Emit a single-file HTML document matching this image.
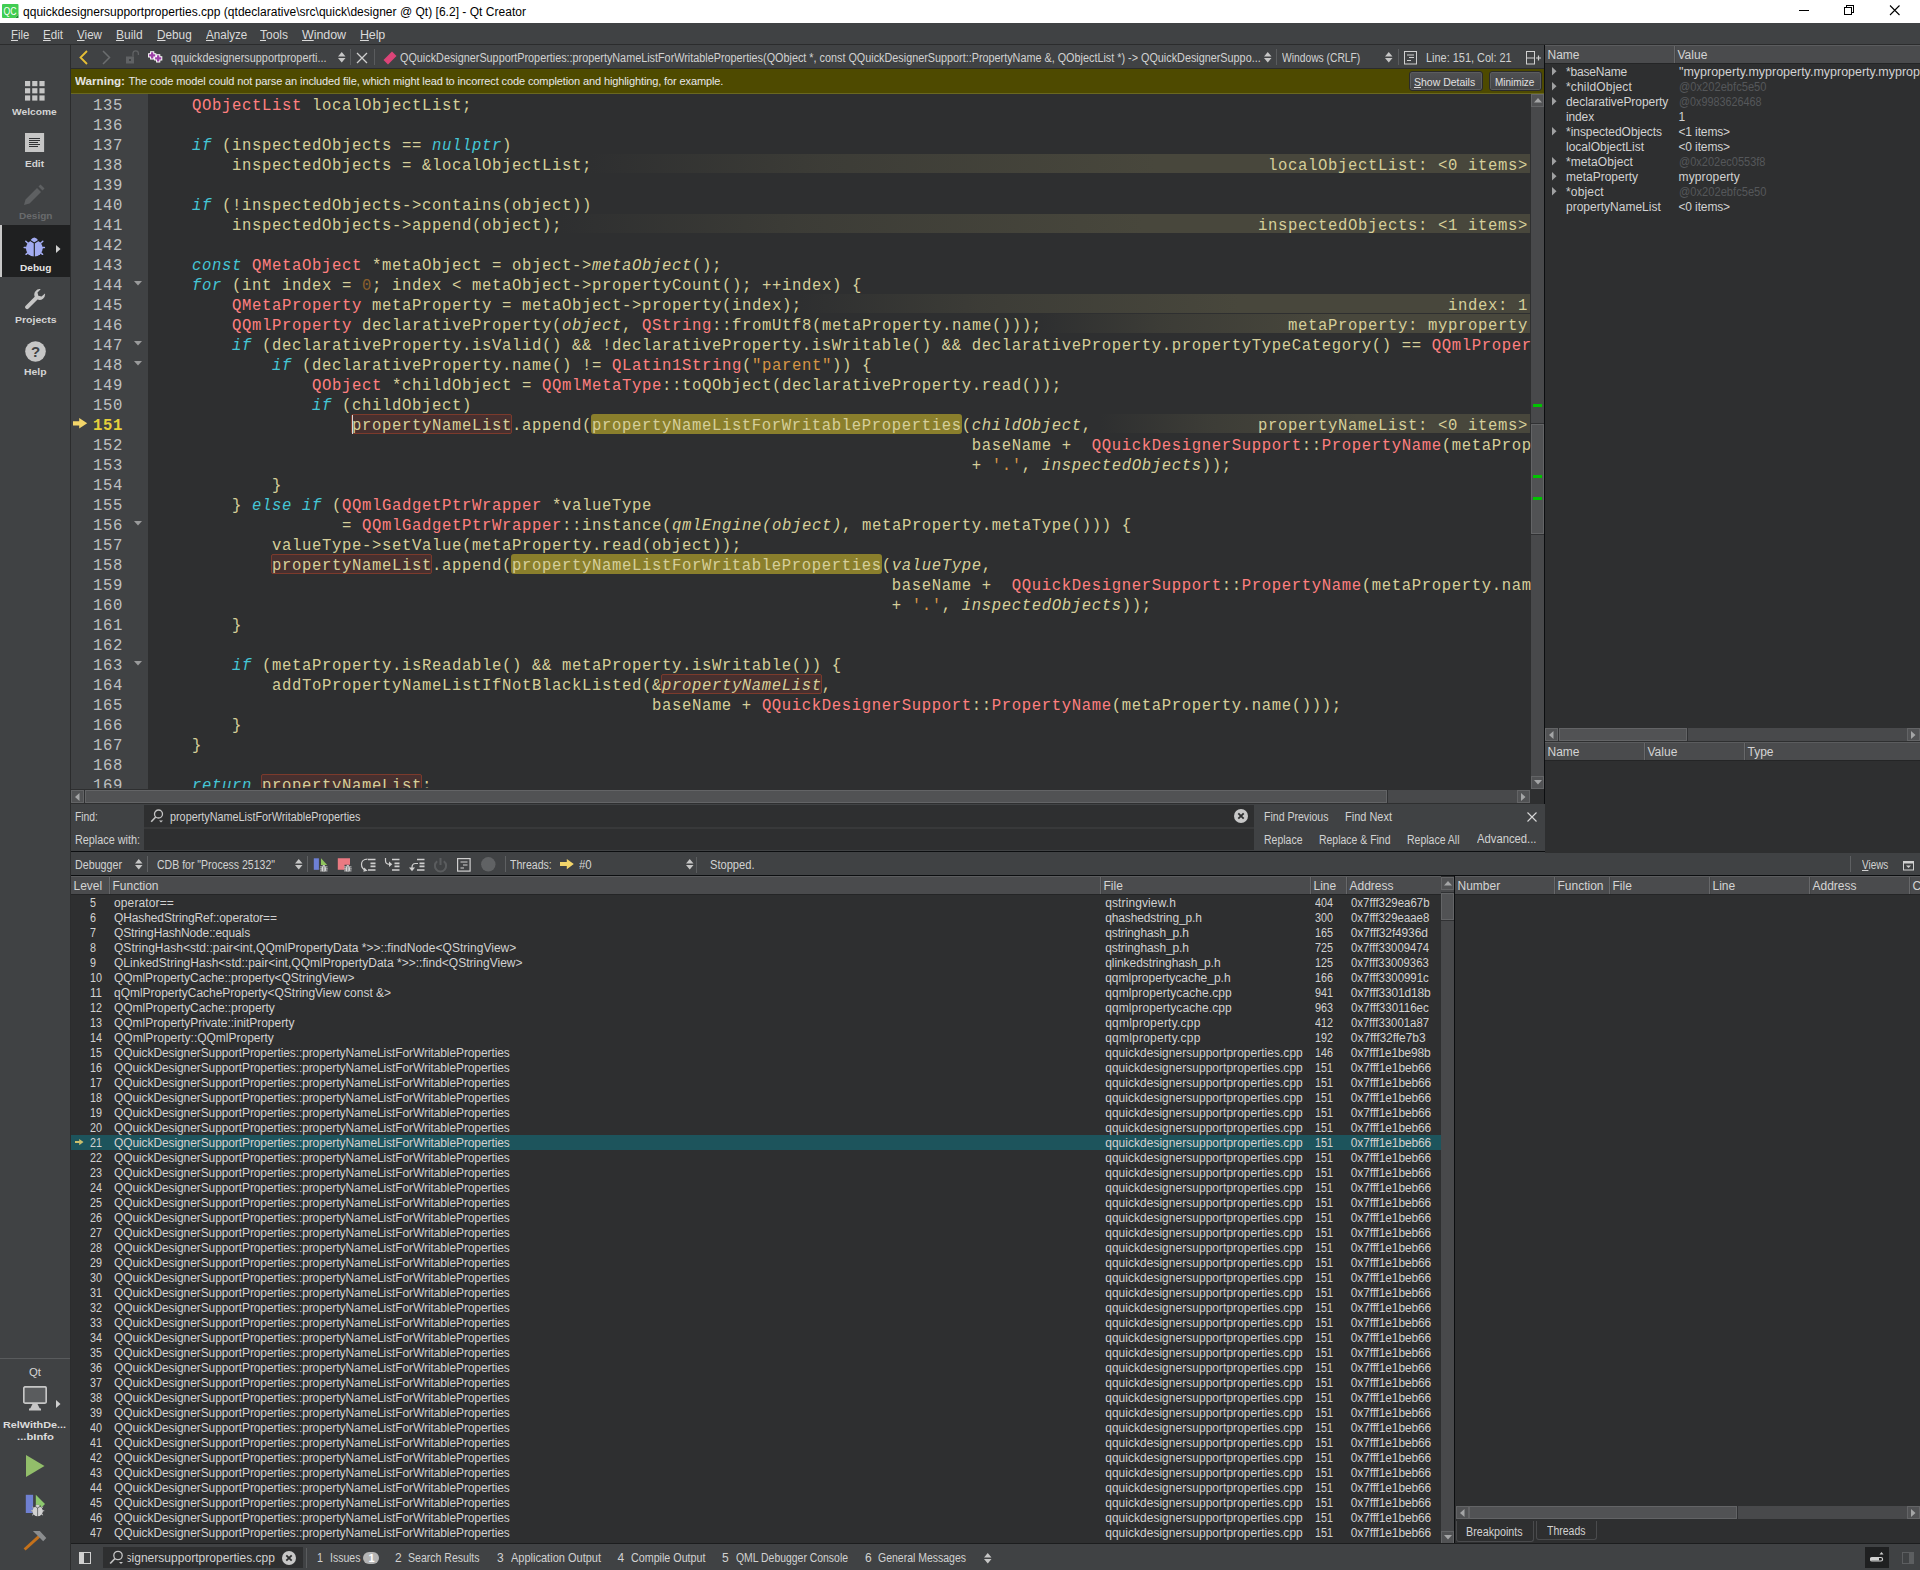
<!DOCTYPE html><html><head><meta charset="utf-8"><title>Qt Creator</title><style>
*{box-sizing:border-box;margin:0;padding:0}
html,body{width:1920px;height:1570px;overflow:hidden;background:#2e2f30}
body{font-family:"Liberation Sans",sans-serif;font-size:12px;color:#d2d2d2;position:relative}
.a{position:absolute;white-space:pre}
.t{position:absolute;white-space:pre;line-height:16px;height:16px}
.b{font-weight:bold}
.hd{position:absolute;background:#4a4b4d;border-top:1px solid #5b5c5e;border-bottom:1px solid #242526;height:19px;overflow:hidden}
.hs{position:absolute;top:0;width:2px;height:17px;background:#67686a;border-right:1px solid #444547}
.mono{font-family:"Liberation Mono",monospace;font-size:15.600px;letter-spacing:0.640px}
.cl{position:absolute;left:152px;height:20px;line-height:20px;white-space:pre;color:#d6cf9a}
.ln{position:absolute;left:72px;width:51px;text-align:right;height:20px;line-height:20px;color:#bec0c2;letter-spacing:0.640px}
.k{color:#45c6d6;font-style:italic}
.ty{color:#ff8080}
.n{color:#8a602c}
.s{color:#d69545}
.i{font-style:italic}
.ann{position:absolute;height:20px}
.sbh{position:absolute;background:#515254;border:1px solid #636466}
.side{position:absolute;left:0;width:70px;text-align:center;font-weight:bold;font-size:11px;color:#d0d0d0;white-space:pre}
u{text-decoration:underline;text-underline-offset:1px}
</style></head><body>
<div class="a" style="left:0px;top:0px;width:1920px;height:23px;background:#ffffff;"></div>
<svg class="a" style="left:2px;top:4px;" width="17" height="14" viewBox="0 0 17 14"><path d="M1 0h14.500a1 1 0 0 1 1 1v9.500l-3.500 3.500h-12a1 1 0 0 1-1-1v-12a1 1 0 0 1 1-1z" fill="#41cd52"/><path d="M13 14l3.500-3.500v3.500z" fill="#1f8f34"/><text x="1.500" y="11" font-family="Liberation Sans" font-size="10.500" fill="#fff" textLength="13" lengthAdjust="spacingAndGlyphs">QC</text></svg>
<div class="t" style="left:23px;top:3.5px;font-family:'Liberation Sans';font-size:12px;letter-spacing:0.020px;color:#000;">qquickdesignersupportproperties.cpp (qtdeclarative\src\quick\designer @ Qt) [6.2] - Qt Creator</div>
<svg class="a" style="left:1780px;top:0px;" width="140" height="23" viewBox="0 0 140 23"><g stroke="#000" stroke-width="1" fill="none" shape-rendering="crispEdges"><path d="M19 10.500h10"/><path d="M64.500 7.500h7v7h-7z"/><path d="M66.500 7.500v-2h7v7h-2"/></g><path d="M110 5.500l9.500 9.500M119.500 5.500l-9.500 9.500" stroke="#000" stroke-width="1.100" fill="none"/></svg>
<div class="a" style="left:0px;top:23px;width:1920px;height:22px;background:#404244;"></div>
<div class="a" style="left:0px;top:44px;width:1920px;height:1px;background:#2b2c2d;"></div>
<div class="t" style="left:11px;top:26.5px;font-family:'Liberation Sans';font-size:12.5px;transform:scaleX(0.9079);transform-origin:0 0;color:#dadada;"><u>F</u>ile</div>
<div class="t" style="left:42.7px;top:26.5px;font-family:'Liberation Sans';font-size:12.5px;transform:scaleX(0.9282);transform-origin:0 0;color:#dadada;"><u>E</u>dit</div>
<div class="t" style="left:77px;top:26.5px;font-family:'Liberation Sans';font-size:12.5px;transform:scaleX(0.9297);transform-origin:0 0;color:#dadada;"><u>V</u>iew</div>
<div class="t" style="left:116px;top:26.5px;font-family:'Liberation Sans';font-size:12.5px;transform:scaleX(0.9600);transform-origin:0 0;color:#dadada;"><u>B</u>uild</div>
<div class="t" style="left:157px;top:26.5px;font-family:'Liberation Sans';font-size:12.5px;transform:scaleX(0.9418);transform-origin:0 0;color:#dadada;"><u>D</u>ebug</div>
<div class="t" style="left:206px;top:26.5px;font-family:'Liberation Sans';font-size:12.5px;transform:scaleX(0.9284);transform-origin:0 0;color:#dadada;"><u>A</u>nalyze</div>
<div class="t" style="left:260px;top:26.5px;font-family:'Liberation Sans';font-size:12.5px;transform:scaleX(0.9593);transform-origin:0 0;color:#dadada;"><u>T</u>ools</div>
<div class="t" style="left:302px;top:26.5px;font-family:'Liberation Sans';font-size:12.5px;letter-spacing:-0.081px;color:#dadada;"><u>W</u>indow</div>
<div class="t" style="left:360px;top:26.5px;font-family:'Liberation Sans';font-size:12.5px;letter-spacing:-0.180px;color:#dadada;"><u>H</u>elp</div>
<div class="a" style="left:0px;top:45px;width:70px;height:1525px;background:#404244;"></div>
<div class="a" style="left:70px;top:45px;width:1px;height:1525px;background:#2b2c2d;"></div>
<div class="a" style="left:71px;top:45px;width:1474px;height:24px;background:#404244;"></div>
<div class="a" style="left:71px;top:68px;width:1474px;height:1px;background:#2b2c2d;"></div>
<svg class="a" style="left:79px;top:50px;" width="9" height="15" viewBox="0 0 9 15"><path d="M8 1l-6.500 6.500 6.500 6.500" stroke="#e6bf36" stroke-width="1.800" fill="none"/></svg>
<svg class="a" style="left:102px;top:50px;" width="9" height="15" viewBox="0 0 9 15"><path d="M1 1l6.500 6.500-6.500 6.500" stroke="#6b6d6f" stroke-width="1.500" fill="none"/></svg>
<svg class="a" style="left:125px;top:49px;" width="15" height="16" viewBox="0 0 15 16"><rect x="1" y="7.500" width="8" height="7" fill="#606264"/><rect x="4" y="10" width="2" height="2" fill="#404244"/><path d="M8 7.500v-3a2.700 2.700 0 0 1 5.400 0v1.500" stroke="#606264" stroke-width="1.300" fill="none"/></svg>
<svg class="a" style="left:147px;top:50px;" width="16" height="14" viewBox="0 0 16 14"><path d="M1.1000000000000005 5.3h8.2M5.2 1.2000000000000002v8.2" stroke="#ffffff" stroke-width="4.2" fill="none"/><path d="M7.1 8.4h8.2M11.2 4.300000000000001v8.2" stroke="#ffffff" stroke-width="4.2" fill="none"/><path d="M2.1 5.3h6.2M5.2 2.1999999999999997v6.2" stroke="#9c3fa6" stroke-width="2.3" fill="none"/><path d="M8.1 8.4h6.2M11.2 5.300000000000001v6.2" stroke="#9c3fa6" stroke-width="2.3" fill="none"/></svg>
<div class="t" style="left:171.4px;top:50px;font-family:'Liberation Sans';font-size:12px;transform:scaleX(0.9076);transform-origin:0 0;">qquickdesignersupportproperti...</div>
<svg class="a" style="left:337.8px;top:52.2px;" width="8" height="11" viewBox="0 0 8 11"><path d="M0 4.500l3.750-4.500 3.750 4.500zM0 5.900l3.750 4.500 3.750-4.500z" fill="#c6c6c6"/></svg>
<div class="a" style="left:350px;top:49px;width:1px;height:16px;background:#5a5c5e;"></div>
<svg class="a" style="left:356px;top:51.5px;" width="12" height="12" viewBox="0 0 12 12"><path d="M1 1l10 10M11 1l-10 10" stroke="#d0d0d0" stroke-width="1.300"/></svg>
<div class="a" style="left:374px;top:49px;width:1px;height:16px;background:#5a5c5e;"></div>
<svg class="a" style="left:383px;top:50.5px;" width="14" height="14" viewBox="0 0 14 14"><path d="M9 .500l4.500 4.500-8.500 8.500-4.500-4.500z" fill="#dc4478"/></svg>
<div class="t" style="left:400px;top:50px;font-family:'Liberation Sans';font-size:12px;transform:scaleX(0.9017);transform-origin:0 0;">QQuickDesignerSupportProperties::propertyNameListForWritableProperties(QObject *, const QQuickDesignerSupport::PropertyName &amp;, QObjectList *) -&gt; QQuickDesignerSuppo...</div>
<svg class="a" style="left:1263.6px;top:52.2px;" width="8" height="11" viewBox="0 0 8 11"><path d="M0 4.500l3.750-4.500 3.750 4.500zM0 5.900l3.750 4.500 3.750-4.500z" fill="#c6c6c6"/></svg>
<div class="a" style="left:1276px;top:49px;width:1px;height:16px;background:#5a5c5e;"></div>
<div class="t" style="left:1281.7px;top:50px;font-family:'Liberation Sans';font-size:12px;transform:scaleX(0.8572);transform-origin:0 0;">Windows (CRLF)</div>
<svg class="a" style="left:1385.2px;top:52.2px;" width="8" height="11" viewBox="0 0 8 11"><path d="M0 4.500l3.750-4.500 3.750 4.500zM0 5.900l3.750 4.500 3.750-4.500z" fill="#c6c6c6"/></svg>
<div class="a" style="left:1398px;top:49px;width:1px;height:16px;background:#5a5c5e;"></div>
<svg class="a" style="left:1404px;top:51px;" width="13" height="14" viewBox="0 0 13 14"><rect x=".5" y=".5" width="12" height="12.500" fill="none" stroke="#d0d0d0"/><path d="M3 4h7M5 6.500h5M3 9.500h4" stroke="#d0d0d0" stroke-width="1"/></svg>
<div class="t" style="left:1426px;top:50px;font-family:'Liberation Sans';font-size:12px;transform:scaleX(0.9109);transform-origin:0 0;">Line: 151, Col: 21</div>
<svg class="a" style="left:1526px;top:51px;" width="15" height="14" viewBox="0 0 15 14"><rect x=".5" y=".5" width="8" height="12.500" fill="none" stroke="#d0d0d0"/><path d="M.500 7h8" stroke="#d0d0d0"/><path d="M10 7h5M12.500 4.500v5" stroke="#d0d0d0" stroke-width="1.200"/></svg>
<div class="a" style="left:71px;top:69px;width:1474px;height:25px;background:#4e4a00;"></div>
<div class="a" style="left:71px;top:93px;width:1474px;height:1px;background:#6a6820;"></div>
<div class="t" style="left:75px;top:73px;font-family:'Liberation Sans';font-size:11px;font-weight:bold;transform:scaleX(1.0582);transform-origin:0 0;color:#e4e4e0;">Warning:</div>
<div class="t" style="left:128.4px;top:73px;font-family:'Liberation Sans';font-size:11px;letter-spacing:-0.113px;color:#e8e8e8;">The code model could not parse an included file, which might lead to incorrect code completion and highlighting, for example.</div>
<div class="a" style="left:1408.5px;top:71px;width:74.0px;height:20px;background:linear-gradient(#4f5052,#434446);border:1px solid #2a2a2a;border-radius:3px;box-shadow:inset 0 0 0 1px #5c5d5f"></div>
<div class="t" style="left:1414.4px;top:73.5px;font-family:'Liberation Sans';font-size:11.5px;transform:scaleX(0.9117);transform-origin:0 0;color:#e0e0e0;"><u>S</u>how Details</div>
<div class="a" style="left:1489px;top:71px;width:52.5px;height:20px;background:linear-gradient(#4f5052,#434446);border:1px solid #2a2a2a;border-radius:3px;box-shadow:inset 0 0 0 1px #5c5d5f"></div>
<div class="t" style="left:1495px;top:73.5px;font-family:'Liberation Sans';font-size:11.5px;transform:scaleX(0.8683);transform-origin:0 0;color:#e0e0e0;">Minimize</div>
<div class="a" style="left:71px;top:94px;width:77px;height:695px;background:#404244;"></div>
<div class="a" style="left:148px;top:94px;width:1383px;height:695px;background:#2e2f30;"></div>
<div class="a mono" style="left:0;top:94px;width:1531px;height:694px;overflow:hidden">
<div class="ln" style="top:2.0px">135</div>
<div class="cl" style="top:2.0px">    <span class="ty">QObjectList</span> localObjectList;</div>
<div class="ln" style="top:22.0px">136</div>
<div class="ln" style="top:42.0px">137</div>
<div class="cl" style="top:42.0px">    <span class="k">if</span> (inspectedObjects == <span class="k">nullptr</span>)</div>
<div class="ann" style="left:590px;top:60px;width:940px;height:19px;background:linear-gradient(90deg,rgba(72,71,60,0) 0,rgba(72,71,60,.55) 25%,rgba(72,71,60,1) 60%)"></div>
<div class="cl" style="left:auto;right:3px;top:62.0px">localObjectList: &lt;0 items&gt;</div>
<div class="ln" style="top:62.0px">138</div>
<div class="cl" style="top:62.0px">        inspectedObjects = &amp;localObjectList;</div>
<div class="ln" style="top:82.0px">139</div>
<div class="ln" style="top:102.0px">140</div>
<div class="cl" style="top:102.0px">    <span class="k">if</span> (!inspectedObjects-&gt;contains(object))</div>
<div class="ann" style="left:560px;top:120px;width:970px;height:19px;background:linear-gradient(90deg,rgba(72,71,60,0) 0,rgba(72,71,60,.55) 25%,rgba(72,71,60,1) 60%)"></div>
<div class="cl" style="left:auto;right:3px;top:122.0px">inspectedObjects: &lt;1 items&gt;</div>
<div class="ln" style="top:122.0px">141</div>
<div class="cl" style="top:122.0px">        inspectedObjects-&gt;append(object);</div>
<div class="ln" style="top:142.0px">142</div>
<div class="ln" style="top:162.0px">143</div>
<div class="cl" style="top:162.0px">    <span class="k">const</span> <span class="ty">QMetaObject</span> *metaObject = object-&gt;<span class="i">metaObject</span>();</div>
<div class="ln" style="top:182.0px">144</div>
<div class="cl" style="top:182.0px">    <span class="k">for</span> (int index = <span class="n">0</span>; index &lt; metaObject-&gt;propertyCount(); ++index) {</div>
<div class="ann" style="left:800px;top:200px;width:730px;height:19px;background:linear-gradient(90deg,rgba(72,71,60,0) 0,rgba(72,71,60,.55) 25%,rgba(72,71,60,1) 60%)"></div>
<div class="cl" style="left:auto;right:3px;top:202.0px">index: 1</div>
<div class="ln" style="top:202.0px">145</div>
<div class="cl" style="top:202.0px">        <span class="ty">QMetaProperty</span> metaProperty = metaObject-&gt;property(index);</div>
<div class="ann" style="left:1040px;top:220px;width:490px;height:19px;background:linear-gradient(90deg,rgba(72,71,60,0) 0,rgba(72,71,60,.55) 25%,rgba(72,71,60,1) 60%)"></div>
<div class="cl" style="left:auto;right:3px;top:222.0px">metaProperty: myproperty</div>
<div class="ln" style="top:222.0px">146</div>
<div class="cl" style="top:222.0px">        <span class="ty">QQmlProperty</span> declarativeProperty(<span class="i">object</span>, <span class="ty">QString</span>::fromUtf8(metaProperty.name()));</div>
<div class="ln" style="top:242.0px">147</div>
<div class="cl" style="top:242.0px">        <span class="k">if</span> (declarativeProperty.isValid() &amp;&amp; !declarativeProperty.isWritable() &amp;&amp; declarativeProperty.propertyTypeCategory() == <span class="ty">QQmlProperty::Object) {</span></div>
<div class="ln" style="top:262.0px">148</div>
<div class="cl" style="top:262.0px">            <span class="k">if</span> (declarativeProperty.name() != <span class="ty">QLatin1String</span>(<span class="s">&quot;parent&quot;</span>)) {</div>
<div class="ln" style="top:282.0px">149</div>
<div class="cl" style="top:282.0px">                <span class="ty">QObject</span> *childObject = <span class="ty">QQmlMetaType</span>::toQObject(declarativeProperty.read());</div>
<div class="ln" style="top:302.0px">150</div>
<div class="cl" style="top:302.0px">                <span class="k">if</span> (childObject)</div>
<div class="ann" style="left:1100px;top:320px;width:430px;height:19px;background:linear-gradient(90deg,rgba(72,71,60,0) 0,rgba(72,71,60,.55) 25%,rgba(72,71,60,1) 60%)"></div>
<div class="cl" style="left:auto;right:3px;top:322.0px">propertyNameList: &lt;0 items&gt;</div>
<div class="a" style="left:351px;top:320px;width:161px;height:20px;background:#47302f;border:1px solid #7c3a2c;border-radius:2px"></div>
<div class="a" style="left:591px;top:320px;width:371px;height:20px;background:#8a7f2c;border-radius:3px"></div>
<div class="ln" style="top:322.0px;color:#e6d03c;font-weight:bold">151</div>
<div class="cl" style="top:322.0px">                    propertyNameList.append(<span style="color:#d6cf9a">propertyNameListForWritableProperties</span>(<span class="i">childObject</span>,</div>
<div class="ln" style="top:342.0px">152</div>
<div class="cl" style="top:342.0px">                                                                                  baseName +  <span class="ty">QQuickDesignerSupport</span>::<span class="ty">PropertyName</span>(metaProperty.name())</div>
<div class="ln" style="top:362.0px">153</div>
<div class="cl" style="top:362.0px">                                                                                  + <span class="s">&#x27;.&#x27;</span>, <span class="i">inspectedObjects</span>));</div>
<div class="ln" style="top:382.0px">154</div>
<div class="cl" style="top:382.0px">            }</div>
<div class="ln" style="top:402.0px">155</div>
<div class="cl" style="top:402.0px">        } <span class="k">else</span> <span class="k">if</span> (<span class="ty">QQmlGadgetPtrWrapper</span> *valueType</div>
<div class="ln" style="top:422.0px">156</div>
<div class="cl" style="top:422.0px">                   = <span class="ty">QQmlGadgetPtrWrapper</span>::instance(<span class="i">qmlEngine(object)</span>, metaProperty.metaType())) {</div>
<div class="ln" style="top:442.0px">157</div>
<div class="cl" style="top:442.0px">            valueType-&gt;setValue(metaProperty.read(object));</div>
<div class="a" style="left:271px;top:460px;width:161px;height:20px;background:#47302f;border:1px solid #7c3a2c;border-radius:2px"></div>
<div class="a" style="left:511px;top:460px;width:371px;height:20px;background:#8a7f2c;border-radius:3px"></div>
<div class="ln" style="top:462.0px">158</div>
<div class="cl" style="top:462.0px">            propertyNameList.append(<span style="color:#d6cf9a">propertyNameListForWritableProperties</span>(<span class="i">valueType</span>,</div>
<div class="ln" style="top:482.0px">159</div>
<div class="cl" style="top:482.0px">                                                                          baseName +  <span class="ty">QQuickDesignerSupport</span>::<span class="ty">PropertyName</span>(metaProperty.name())</div>
<div class="ln" style="top:502.0px">160</div>
<div class="cl" style="top:502.0px">                                                                          + <span class="s">&#x27;.&#x27;</span>, <span class="i">inspectedObjects</span>));</div>
<div class="ln" style="top:522.0px">161</div>
<div class="cl" style="top:522.0px">        }</div>
<div class="ln" style="top:542.0px">162</div>
<div class="ln" style="top:562.0px">163</div>
<div class="cl" style="top:562.0px">        <span class="k">if</span> (metaProperty.isReadable() &amp;&amp; metaProperty.isWritable()) {</div>
<div class="a" style="left:661px;top:580px;width:161px;height:20px;background:#47302f;border:1px solid #7c3a2c;border-radius:2px"></div>
<div class="ln" style="top:582.0px">164</div>
<div class="cl" style="top:582.0px">            addToPropertyNameListIfNotBlackListed(&amp;<span class="i">propertyNameList</span>,</div>
<div class="ln" style="top:602.0px">165</div>
<div class="cl" style="top:602.0px">                                                  baseName + <span class="ty">QQuickDesignerSupport</span>::<span class="ty">PropertyName</span>(metaProperty.name()));</div>
<div class="ln" style="top:622.0px">166</div>
<div class="cl" style="top:622.0px">        }</div>
<div class="ln" style="top:642.0px">167</div>
<div class="cl" style="top:642.0px">    }</div>
<div class="ln" style="top:662.0px">168</div>
<div class="a" style="left:261px;top:680px;width:161px;height:20px;background:#47302f;border:1px solid #7c3a2c;border-radius:2px"></div>
<div class="ln" style="top:682.0px">169</div>
<div class="cl" style="top:682.0px">    <span class="k">return</span> propertyNameList;</div>
</div>
<svg class="a" style="left:134px;top:281px;" width="8" height="5" viewBox="0 0 8 5"><path d="M0 0h8l-4 4.500z" fill="#9a9b9c"/></svg>
<svg class="a" style="left:134px;top:341px;" width="8" height="5" viewBox="0 0 8 5"><path d="M0 0h8l-4 4.500z" fill="#9a9b9c"/></svg>
<svg class="a" style="left:134px;top:361px;" width="8" height="5" viewBox="0 0 8 5"><path d="M0 0h8l-4 4.500z" fill="#9a9b9c"/></svg>
<svg class="a" style="left:134px;top:521px;" width="8" height="5" viewBox="0 0 8 5"><path d="M0 0h8l-4 4.500z" fill="#9a9b9c"/></svg>
<svg class="a" style="left:134px;top:661px;" width="8" height="5" viewBox="0 0 8 5"><path d="M0 0h8l-4 4.500z" fill="#9a9b9c"/></svg>
<svg class="a" style="left:72.9px;top:417.7px;" width="15" height="11" viewBox="0 0 15 11"><path d="M0 3.200h6.200v-3.200l8 5.300-8 5.300v-3.200h-6.200z" fill="#f3d56a"/></svg>
<div class="a" style="left:352px;top:415px;width:1px;height:19px;background:#d8d8d8;"></div>
<div class="a" style="left:1531px;top:94px;width:13px;height:695px;background:#48494b;"></div>
<div class="a" style="left:1531px;top:423px;width:13px;height:112px;background:#303133;"></div>
<div class="sbh" style="left:1531px;top:94px;width:13px;height:13px"></div>
<svg class="a" style="left:1533.5px;top:98px;" width="8" height="5" viewBox="0 0 8 5"><path d="M0 4.500h8l-4-4.500z" fill="#a4a5a6"/></svg>
<div class="sbh" style="left:1531px;top:776px;width:13px;height:13px"></div>
<svg class="a" style="left:1533.5px;top:780px;" width="8" height="5" viewBox="0 0 8 5"><path d="M0 0h8l-4 4.500z" fill="#a4a5a6"/></svg>
<div class="sbh" style="left:1531px;top:424px;width:13px;height:110px"></div>
<div class="a" style="left:1533px;top:404px;width:9px;height:3px;background:#00c400;"></div>
<div class="a" style="left:1533px;top:475px;width:9px;height:3px;background:#00c400;"></div>
<div class="a" style="left:1533px;top:497px;width:9px;height:3px;background:#00c400;"></div>
<div class="a" style="left:71px;top:789px;width:1474px;height:15px;background:#2e2f30;"></div>
<div class="a" style="left:71px;top:790px;width:1459px;height:13px;background:#48494b;"></div>
<div class="a" style="left:84px;top:790px;width:1304px;height:13px;background:#303133;"></div>
<div class="sbh" style="left:71px;top:790px;width:13px;height:13px"></div>
<svg class="a" style="left:75px;top:792.5px;" width="5" height="8" viewBox="0 0 5 8"><path d="M4.500 0v8l-4.500-4z" fill="#a4a5a6"/></svg>
<div class="sbh" style="left:1517px;top:790px;width:13px;height:13px"></div>
<svg class="a" style="left:1521px;top:792.5px;" width="5" height="8" viewBox="0 0 5 8"><path d="M0 0v8l4.500-4z" fill="#a4a5a6"/></svg>
<div class="sbh" style="left:85px;top:790px;width:1302px;height:13px"></div>
<div class="a" style="left:1544px;top:45px;width:1px;height:808px;background:#0c0e10;"></div>
<div class="a" style="left:71px;top:804px;width:1474px;height:47px;background:#404244;"></div>
<div class="a" style="left:71px;top:851px;width:1849px;height:1px;background:#0c0e10;"></div>
<div class="t" style="left:75px;top:808.5px;font-family:'Liberation Sans';font-size:12px;transform:scaleX(0.8618);transform-origin:0 0;">Find:</div>
<div class="t" style="left:75px;top:832px;font-family:'Liberation Sans';font-size:12px;transform:scaleX(0.9022);transform-origin:0 0;">Replace with:</div>
<div class="a" style="left:144px;top:805px;width:1110px;height:22px;background:#2e2f30;"></div>
<div class="a" style="left:144px;top:827px;width:1110px;height:2px;background:#38393a;"></div>
<div class="a" style="left:144px;top:828.5px;width:1110px;height:21px;background:#2e2f30;"></div>
<div class="t" style="left:170px;top:808.5px;font-family:'Liberation Sans';font-size:12px;transform:scaleX(0.9020);transform-origin:0 0;">propertyNameListForWritableProperties</div>
<svg class="a" style="left:150px;top:809px;" width="16" height="14" viewBox="0 0 16 14"><circle cx="8.500" cy="5" r="4" fill="none" stroke="#c4c4c4" stroke-width="1.300"/><path d="M5.700 8l-4.500 4.800" stroke="#c4c4c4" stroke-width="1.600"/><path d="M9 11.500h4l-2 2z" fill="#c4c4c4"/></svg>
<svg class="a" style="left:1234px;top:809px;" width="14" height="14" viewBox="0 0 14 14"><circle cx="7" cy="7" r="7" fill="#c8c8c8"/><path d="M4.300 4.300l5.400 5.400M9.700 4.300l-5.400 5.400" stroke="#2e2f30" stroke-width="1.800"/></svg>
<div class="t" style="left:1264px;top:808.5px;font-family:'Liberation Sans';font-size:12px;transform:scaleX(0.8790);transform-origin:0 0;">Find Previous</div>
<div class="t" style="left:1345px;top:808.5px;font-family:'Liberation Sans';font-size:12px;transform:scaleX(0.9151);transform-origin:0 0;">Find Next</div>
<div class="t" style="left:1264px;top:832px;font-family:'Liberation Sans';font-size:12px;transform:scaleX(0.8744);transform-origin:0 0;">Replace</div>
<div class="t" style="left:1319px;top:832px;font-family:'Liberation Sans';font-size:12px;transform:scaleX(0.8715);transform-origin:0 0;">Replace &amp; Find</div>
<div class="t" style="left:1407px;top:832px;font-family:'Liberation Sans';font-size:12px;transform:scaleX(0.8743);transform-origin:0 0;">Replace All</div>
<div class="t" style="left:1476.5px;top:831px;font-family:'Liberation Sans';font-size:12px;transform:scaleX(0.9389);transform-origin:0 0;">Advanced...</div>
<svg class="a" style="left:1526.5px;top:811.5px;" width="10" height="10" viewBox="0 0 10 10"><path d="M.500 .500l9 9M9.500 .500l-9 9" stroke="#d8d8d8" stroke-width="1.100"/></svg>
<div class="a" style="left:71px;top:852px;width:1849px;height:23px;background:#404244;"></div>
<div class="a" style="left:71px;top:875px;width:1849px;height:1px;background:#0c0e10;"></div>
<div class="t" style="left:75px;top:857px;font-family:'Liberation Sans';font-size:12px;transform:scaleX(0.8915);transform-origin:0 0;">Debugger</div>
<svg class="a" style="left:134.8px;top:858.9px;" width="8" height="11" viewBox="0 0 8 11"><path d="M0 4.500l3.750-4.500 3.750 4.500zM0 5.900l3.750 4.500 3.750-4.500z" fill="#c6c6c6"/></svg>
<div class="a" style="left:147px;top:856px;width:1px;height:16px;background:#5e6062;"></div>
<div class="t" style="left:156.6px;top:857px;font-family:'Liberation Sans';font-size:12px;transform:scaleX(0.8768);transform-origin:0 0;">CDB for &quot;Process 25132&quot;</div>
<svg class="a" style="left:294.8px;top:858.9px;" width="8" height="11" viewBox="0 0 8 11"><path d="M0 4.500l3.750-4.500 3.750 4.500zM0 5.900l3.750 4.500 3.750-4.500z" fill="#c6c6c6"/></svg>
<div class="a" style="left:307px;top:856px;width:1px;height:16px;background:#5e6062;"></div>
<svg class="a" style="left:313px;top:858px;" width="16" height="16" viewBox="0 0 16 16"><rect x=".8" y=".3" width="5.100" height="11.500" fill="#6d80d6"/><path d="M8 .300l6.200 6.700h-6.200z" fill="#8fc35c"/><g transform="translate(6.800,6.600)"><g fill="#d4d4d4"><ellipse cx="4" cy="4.300" rx="2.300" ry="2.700"/><path d="M2.600 1.800a1.400 1.400 0 0 1 2.800 0z"/><path d="M.300 2.300h7.400M0 4.300h8M.300 6.300h7.400" stroke="#d4d4d4" stroke-width=".9"/></g><path d="M4 2v5" stroke="#404244" stroke-width=".6"/></g></svg>
<svg class="a" style="left:337px;top:858px;" width="16" height="16" viewBox="0 0 16 16"><path d="M.8 .3h12.200v6.500h-5.500v5h-6.700z" fill="#ea7a82"/><g transform="translate(6.800,6.600)"><g fill="#d4d4d4"><ellipse cx="4" cy="4.300" rx="2.300" ry="2.700"/><path d="M2.600 1.800a1.400 1.400 0 0 1 2.800 0z"/><path d="M.300 2.300h7.400M0 4.300h8M.300 6.300h7.400" stroke="#d4d4d4" stroke-width=".9"/></g><path d="M4 2v5" stroke="#404244" stroke-width=".6"/></g></svg>
<svg class="a" style="left:360px;top:858px;" width="16" height="16" viewBox="0 0 16 16"><path d="M7.500 1.200c-4 0-6 2.500-6 5s1.500 5 4 5.800" fill="none" stroke="#cfcfcf" stroke-width="1.200"/><path d="M4.300 9.500l3.200 3.200-4.200 1z" fill="#cfcfcf"/><path d="M8 1.500h7.500M10.5 5.300h5M10.5 8.300h5M8 12h7.500" stroke="#cfcfcf" stroke-width="1.700"/></svg>
<svg class="a" style="left:384px;top:858px;" width="16" height="16" viewBox="0 0 16 16"><path d="M1.500 0v2.500c0 2.500 1.500 3.800 4 3.800h1" fill="none" stroke="#cfcfcf" stroke-width="1.200"/><path d="M5 3.500l3.300 2.800-3.300 2.800z" fill="#cfcfcf"/><path d="M8 1.500h7.500M10.5 5.300h5M10.5 8.300h5M8 12h7.500" stroke="#cfcfcf" stroke-width="1.700"/></svg>
<svg class="a" style="left:408.5px;top:858px;" width="16" height="16" viewBox="0 0 16 16"><path d="M9 5.500h-2.500c-2.500 0-3.500 1.500-3.500 4v1" fill="none" stroke="#cfcfcf" stroke-width="1.200"/><path d="M0 9.500h6l-3 3.800z" fill="#cfcfcf"/><path d="M8 1.500h7.500M10.5 5.300h5M10.5 8.300h5M8 12h7.500" stroke="#cfcfcf" stroke-width="1.700"/></svg>
<svg class="a" style="left:433px;top:857.5px;" width="15" height="15" viewBox="0 0 15 15"><path d="M4.200 3.300a5.600 5.600 0 1 0 6.600 0" fill="none" stroke="#5a5c5e" stroke-width="2"/><path d="M7.500 0v7" stroke="#5a5c5e" stroke-width="2"/></svg>
<svg class="a" style="left:457px;top:858px;" width="14" height="14" viewBox="0 0 14 14"><rect x=".6" y=".6" width="12.500" height="12.500" fill="none" stroke="#cfcfcf" stroke-width="1.200"/><path d="M3.500 4h7M6 7h4.500M3.500 10h3.500" stroke="#cfcfcf" stroke-width="1.100"/></svg>
<svg class="a" style="left:481px;top:857px;" width="15" height="15" viewBox="0 0 15 15"><circle cx="7.300" cy="7.300" r="7.200" fill="#606264"/></svg>
<div class="a" style="left:505px;top:856px;width:1px;height:16px;background:#5e6062;"></div>
<div class="t" style="left:510px;top:857px;font-family:'Liberation Sans';font-size:12px;transform:scaleX(0.8826);transform-origin:0 0;">Threads:</div>
<svg class="a" style="left:559.8px;top:859px;" width="14" height="10.5" viewBox="0 0 14 10.5"><path d="M0 3.100h6.800v-3.100l7 5.100-7 5.100v-3.100h-6.800z" fill="#f3d56a"/></svg>
<div class="t" style="left:578.7px;top:857px;font-family:'Liberation Sans';font-size:12px;transform:scaleX(0.9506);transform-origin:0 0;">#0</div>
<svg class="a" style="left:686.2px;top:858.9px;" width="8" height="11" viewBox="0 0 8 11"><path d="M0 4.500l3.750-4.500 3.750 4.500zM0 5.900l3.750 4.500 3.750-4.500z" fill="#c6c6c6"/></svg>
<div class="a" style="left:695.5px;top:857px;width:1px;height:16px;background:#5a5c5e;"></div>
<div class="t" style="left:710px;top:857px;font-family:'Liberation Sans';font-size:12px;transform:scaleX(0.9262);transform-origin:0 0;">Stopped.</div>
<div class="a" style="left:1850px;top:856px;width:1px;height:16px;background:#5e6062;"></div>
<div class="t" style="left:1861.7px;top:857px;font-family:'Liberation Sans';font-size:12px;transform:scaleX(0.8267);transform-origin:0 0;"><u>V</u>iews</div>
<svg class="a" style="left:1903px;top:861px;" width="11" height="10" viewBox="0 0 11 10"><rect x=".5" y=".5" width="10" height="8.500" fill="none" stroke="#d0d0d0"/><path d="M.500 1.500h10" stroke="#d0d0d0" stroke-width="2"/><path d="M3 4.500h5l-2.500 2.500z" fill="#d0d0d0"/></svg>
<div class="a" style="left:71px;top:876px;width:1370px;height:669px;background:#2e2f30;"></div>
<div class="hd" style="left:71px;top:876px;width:1370px">
<div class="hs" style="left:37.5px"></div>
<div class="hs" style="left:1028.5px"></div>
<div class="hs" style="left:1238.5px"></div>
<div class="hs" style="left:1274.5px"></div>
</div>
<div class="t" style="left:73.5px;top:877.5px;font-family:'Liberation Sans';font-size:12px;color:#d4d4d4;">Level</div>
<div class="t" style="left:112.5px;top:877.5px;font-family:'Liberation Sans';font-size:12px;color:#d4d4d4;">Function</div>
<div class="t" style="left:1103.5px;top:877.5px;font-family:'Liberation Sans';font-size:12px;color:#d4d4d4;">File</div>
<div class="t" style="left:1313.5px;top:877.5px;font-family:'Liberation Sans';font-size:12px;color:#d4d4d4;">Line</div>
<div class="t" style="left:1349.5px;top:877.5px;font-family:'Liberation Sans';font-size:12px;color:#d4d4d4;">Address</div>
<div class="a" style="left:71px;top:1135px;width:1370px;height:15px;background:#1d545c;"></div>
<div class="t" style="left:90.3px;top:894.5px;font-family:'Liberation Sans';font-size:12px;transform:scaleX(0.8972);transform-origin:0 0;">5</div>
<div class="t" style="left:114px;top:894.5px;font-family:'Liberation Sans';font-size:12px;letter-spacing:0.128px;">operator==</div>
<div class="t" style="left:1105.2px;top:894.5px;font-family:'Liberation Sans';font-size:12px;letter-spacing:0.110px;">qstringview.h</div>
<div class="t" style="left:1315px;top:894.5px;font-family:'Liberation Sans';font-size:12px;transform:scaleX(0.8986);transform-origin:0 0;">404</div>
<div class="t" style="left:1350.8px;top:894.5px;font-family:'Liberation Sans';font-size:12px;transform:scaleX(0.9537);transform-origin:0 0;">0x7fff329ea67b</div>
<div class="t" style="left:90.3px;top:909.5px;font-family:'Liberation Sans';font-size:12px;transform:scaleX(0.8972);transform-origin:0 0;">6</div>
<div class="t" style="left:114px;top:909.5px;font-family:'Liberation Sans';font-size:12px;letter-spacing:-0.115px;">QHashedStringRef::operator==</div>
<div class="t" style="left:1105.2px;top:909.5px;font-family:'Liberation Sans';font-size:12px;letter-spacing:-0.126px;">qhashedstring_p.h</div>
<div class="t" style="left:1315px;top:909.5px;font-family:'Liberation Sans';font-size:12px;transform:scaleX(0.8986);transform-origin:0 0;">300</div>
<div class="t" style="left:1350.8px;top:909.5px;font-family:'Liberation Sans';font-size:12px;transform:scaleX(0.9513);transform-origin:0 0;">0x7fff329eaae8</div>
<div class="t" style="left:90.3px;top:924.5px;font-family:'Liberation Sans';font-size:12px;transform:scaleX(0.8972);transform-origin:0 0;">7</div>
<div class="t" style="left:114px;top:924.5px;font-family:'Liberation Sans';font-size:12px;letter-spacing:-0.149px;">QStringHashNode::equals</div>
<div class="t" style="left:1105.2px;top:924.5px;font-family:'Liberation Sans';font-size:12px;letter-spacing:-0.114px;">qstringhash_p.h</div>
<div class="t" style="left:1315px;top:924.5px;font-family:'Liberation Sans';font-size:12px;transform:scaleX(0.8986);transform-origin:0 0;">165</div>
<div class="t" style="left:1350.8px;top:924.5px;font-family:'Liberation Sans';font-size:12px;letter-spacing:-0.148px;">0x7fff32f4936d</div>
<div class="t" style="left:90.3px;top:939.5px;font-family:'Liberation Sans';font-size:12px;transform:scaleX(0.8972);transform-origin:0 0;">8</div>
<div class="t" style="left:114px;top:939.5px;font-family:'Liberation Sans';font-size:12px;letter-spacing:0.024px;">QStringHash&lt;std::pair&lt;int,QQmlPropertyData *&gt;&gt;::findNode&lt;QStringView&gt;</div>
<div class="t" style="left:1105.2px;top:939.5px;font-family:'Liberation Sans';font-size:12px;letter-spacing:-0.114px;">qstringhash_p.h</div>
<div class="t" style="left:1315px;top:939.5px;font-family:'Liberation Sans';font-size:12px;transform:scaleX(0.8986);transform-origin:0 0;">725</div>
<div class="t" style="left:1350.8px;top:939.5px;font-family:'Liberation Sans';font-size:12px;transform:scaleX(0.9488);transform-origin:0 0;">0x7fff33009474</div>
<div class="t" style="left:90.3px;top:954.5px;font-family:'Liberation Sans';font-size:12px;transform:scaleX(0.8972);transform-origin:0 0;">9</div>
<div class="t" style="left:114px;top:954.5px;font-family:'Liberation Sans';font-size:12px;letter-spacing:0.017px;">QLinkedStringHash&lt;std::pair&lt;int,QQmlPropertyData *&gt;&gt;::find&lt;QStringView&gt;</div>
<div class="t" style="left:1105.2px;top:954.5px;font-family:'Liberation Sans';font-size:12px;letter-spacing:-0.069px;">qlinkedstringhash_p.h</div>
<div class="t" style="left:1315px;top:954.5px;font-family:'Liberation Sans';font-size:12px;transform:scaleX(0.8986);transform-origin:0 0;">125</div>
<div class="t" style="left:1350.8px;top:954.5px;font-family:'Liberation Sans';font-size:12px;transform:scaleX(0.9452);transform-origin:0 0;">0x7fff33009363</div>
<div class="t" style="left:90.3px;top:969.5px;font-family:'Liberation Sans';font-size:12px;transform:scaleX(0.8982);transform-origin:0 0;">10</div>
<div class="t" style="left:114px;top:969.5px;font-family:'Liberation Sans';font-size:12px;letter-spacing:-0.054px;">QQmlPropertyCache::property&lt;QStringView&gt;</div>
<div class="t" style="left:1105.2px;top:969.5px;font-family:'Liberation Sans';font-size:12px;letter-spacing:-0.001px;">qqmlpropertycache_p.h</div>
<div class="t" style="left:1315px;top:969.5px;font-family:'Liberation Sans';font-size:12px;transform:scaleX(0.8986);transform-origin:0 0;">166</div>
<div class="t" style="left:1350.8px;top:969.5px;font-family:'Liberation Sans';font-size:12px;transform:scaleX(0.9530);transform-origin:0 0;">0x7fff3300991c</div>
<div class="t" style="left:90.3px;top:984.5px;font-family:'Liberation Sans';font-size:12px;transform:scaleX(0.9624);transform-origin:0 0;">11</div>
<div class="t" style="left:114px;top:984.5px;font-family:'Liberation Sans';font-size:12px;letter-spacing:-0.020px;">qQmlPropertyCacheProperty&lt;QStringView const &amp;&gt;</div>
<div class="t" style="left:1105.2px;top:984.5px;font-family:'Liberation Sans';font-size:12px;letter-spacing:0.089px;">qqmlpropertycache.cpp</div>
<div class="t" style="left:1315px;top:984.5px;font-family:'Liberation Sans';font-size:12px;transform:scaleX(0.8986);transform-origin:0 0;">941</div>
<div class="t" style="left:1350.8px;top:984.5px;font-family:'Liberation Sans';font-size:12px;letter-spacing:-0.187px;">0x7fff3301d18b</div>
<div class="t" style="left:90.3px;top:999.5px;font-family:'Liberation Sans';font-size:12px;transform:scaleX(0.8982);transform-origin:0 0;">12</div>
<div class="t" style="left:114px;top:999.5px;font-family:'Liberation Sans';font-size:12px;letter-spacing:-0.050px;">QQmlPropertyCache::property</div>
<div class="t" style="left:1105.2px;top:999.5px;font-family:'Liberation Sans';font-size:12px;letter-spacing:0.089px;">qqmlpropertycache.cpp</div>
<div class="t" style="left:1315px;top:999.5px;font-family:'Liberation Sans';font-size:12px;transform:scaleX(0.8986);transform-origin:0 0;">963</div>
<div class="t" style="left:1350.8px;top:999.5px;font-family:'Liberation Sans';font-size:12px;transform:scaleX(0.9635);transform-origin:0 0;">0x7fff330116ec</div>
<div class="t" style="left:90.3px;top:1014.5px;font-family:'Liberation Sans';font-size:12px;transform:scaleX(0.8982);transform-origin:0 0;">13</div>
<div class="t" style="left:114px;top:1014.5px;font-family:'Liberation Sans';font-size:12px;letter-spacing:-0.030px;">QQmlPropertyPrivate::initProperty</div>
<div class="t" style="left:1105.2px;top:1014.5px;font-family:'Liberation Sans';font-size:12px;letter-spacing:0.223px;">qqmlproperty.cpp</div>
<div class="t" style="left:1315px;top:1014.5px;font-family:'Liberation Sans';font-size:12px;transform:scaleX(0.8986);transform-origin:0 0;">412</div>
<div class="t" style="left:1350.8px;top:1014.5px;font-family:'Liberation Sans';font-size:12px;transform:scaleX(0.9488);transform-origin:0 0;">0x7fff33001a87</div>
<div class="t" style="left:90.3px;top:1029.5px;font-family:'Liberation Sans';font-size:12px;transform:scaleX(0.8982);transform-origin:0 0;">14</div>
<div class="t" style="left:114px;top:1029.5px;font-family:'Liberation Sans';font-size:12px;letter-spacing:-0.009px;">QQmlProperty::QQmlProperty</div>
<div class="t" style="left:1105.2px;top:1029.5px;font-family:'Liberation Sans';font-size:12px;letter-spacing:0.223px;">qqmlproperty.cpp</div>
<div class="t" style="left:1315px;top:1029.5px;font-family:'Liberation Sans';font-size:12px;transform:scaleX(0.8986);transform-origin:0 0;">192</div>
<div class="t" style="left:1350.8px;top:1029.5px;font-family:'Liberation Sans';font-size:12px;letter-spacing:-0.044px;">0x7fff32ffe7b3</div>
<div class="t" style="left:90.3px;top:1044.5px;font-family:'Liberation Sans';font-size:12px;transform:scaleX(0.8982);transform-origin:0 0;">15</div>
<div class="t" style="left:114px;top:1044.5px;font-family:'Liberation Sans';font-size:12px;letter-spacing:-0.099px;">QQuickDesignerSupportProperties::propertyNameListForWritableProperties</div>
<div class="t" style="left:1105.2px;top:1044.5px;font-family:'Liberation Sans';font-size:12px;letter-spacing:0.023px;">qquickdesignersupportproperties.cpp</div>
<div class="t" style="left:1315px;top:1044.5px;font-family:'Liberation Sans';font-size:12px;transform:scaleX(0.8986);transform-origin:0 0;">146</div>
<div class="t" style="left:1350.8px;top:1044.5px;font-family:'Liberation Sans';font-size:12px;letter-spacing:-0.187px;">0x7fff1e1be98b</div>
<div class="t" style="left:90.3px;top:1059.5px;font-family:'Liberation Sans';font-size:12px;transform:scaleX(0.8982);transform-origin:0 0;">16</div>
<div class="t" style="left:114px;top:1059.5px;font-family:'Liberation Sans';font-size:12px;letter-spacing:-0.099px;">QQuickDesignerSupportProperties::propertyNameListForWritableProperties</div>
<div class="t" style="left:1105.2px;top:1059.5px;font-family:'Liberation Sans';font-size:12px;letter-spacing:0.023px;">qquickdesignersupportproperties.cpp</div>
<div class="t" style="left:1315px;top:1059.5px;font-family:'Liberation Sans';font-size:12px;transform:scaleX(0.8986);transform-origin:0 0;">151</div>
<div class="t" style="left:1350.8px;top:1059.5px;font-family:'Liberation Sans';font-size:12px;letter-spacing:-0.151px;">0x7fff1e1beb66</div>
<div class="t" style="left:90.3px;top:1074.5px;font-family:'Liberation Sans';font-size:12px;transform:scaleX(0.8982);transform-origin:0 0;">17</div>
<div class="t" style="left:114px;top:1074.5px;font-family:'Liberation Sans';font-size:12px;letter-spacing:-0.099px;">QQuickDesignerSupportProperties::propertyNameListForWritableProperties</div>
<div class="t" style="left:1105.2px;top:1074.5px;font-family:'Liberation Sans';font-size:12px;letter-spacing:0.023px;">qquickdesignersupportproperties.cpp</div>
<div class="t" style="left:1315px;top:1074.5px;font-family:'Liberation Sans';font-size:12px;transform:scaleX(0.8986);transform-origin:0 0;">151</div>
<div class="t" style="left:1350.8px;top:1074.5px;font-family:'Liberation Sans';font-size:12px;letter-spacing:-0.151px;">0x7fff1e1beb66</div>
<div class="t" style="left:90.3px;top:1089.5px;font-family:'Liberation Sans';font-size:12px;transform:scaleX(0.8982);transform-origin:0 0;">18</div>
<div class="t" style="left:114px;top:1089.5px;font-family:'Liberation Sans';font-size:12px;letter-spacing:-0.099px;">QQuickDesignerSupportProperties::propertyNameListForWritableProperties</div>
<div class="t" style="left:1105.2px;top:1089.5px;font-family:'Liberation Sans';font-size:12px;letter-spacing:0.023px;">qquickdesignersupportproperties.cpp</div>
<div class="t" style="left:1315px;top:1089.5px;font-family:'Liberation Sans';font-size:12px;transform:scaleX(0.8986);transform-origin:0 0;">151</div>
<div class="t" style="left:1350.8px;top:1089.5px;font-family:'Liberation Sans';font-size:12px;letter-spacing:-0.151px;">0x7fff1e1beb66</div>
<div class="t" style="left:90.3px;top:1104.5px;font-family:'Liberation Sans';font-size:12px;transform:scaleX(0.8982);transform-origin:0 0;">19</div>
<div class="t" style="left:114px;top:1104.5px;font-family:'Liberation Sans';font-size:12px;letter-spacing:-0.099px;">QQuickDesignerSupportProperties::propertyNameListForWritableProperties</div>
<div class="t" style="left:1105.2px;top:1104.5px;font-family:'Liberation Sans';font-size:12px;letter-spacing:0.023px;">qquickdesignersupportproperties.cpp</div>
<div class="t" style="left:1315px;top:1104.5px;font-family:'Liberation Sans';font-size:12px;transform:scaleX(0.8986);transform-origin:0 0;">151</div>
<div class="t" style="left:1350.8px;top:1104.5px;font-family:'Liberation Sans';font-size:12px;letter-spacing:-0.151px;">0x7fff1e1beb66</div>
<div class="t" style="left:90.3px;top:1119.5px;font-family:'Liberation Sans';font-size:12px;transform:scaleX(0.8982);transform-origin:0 0;">20</div>
<div class="t" style="left:114px;top:1119.5px;font-family:'Liberation Sans';font-size:12px;letter-spacing:-0.099px;">QQuickDesignerSupportProperties::propertyNameListForWritableProperties</div>
<div class="t" style="left:1105.2px;top:1119.5px;font-family:'Liberation Sans';font-size:12px;letter-spacing:0.023px;">qquickdesignersupportproperties.cpp</div>
<div class="t" style="left:1315px;top:1119.5px;font-family:'Liberation Sans';font-size:12px;transform:scaleX(0.8986);transform-origin:0 0;">151</div>
<div class="t" style="left:1350.8px;top:1119.5px;font-family:'Liberation Sans';font-size:12px;letter-spacing:-0.151px;">0x7fff1e1beb66</div>
<div class="t" style="left:90.3px;top:1134.5px;font-family:'Liberation Sans';font-size:12px;transform:scaleX(0.8982);transform-origin:0 0;">21</div>
<div class="t" style="left:114px;top:1134.5px;font-family:'Liberation Sans';font-size:12px;letter-spacing:-0.099px;">QQuickDesignerSupportProperties::propertyNameListForWritableProperties</div>
<div class="t" style="left:1105.2px;top:1134.5px;font-family:'Liberation Sans';font-size:12px;letter-spacing:0.023px;">qquickdesignersupportproperties.cpp</div>
<div class="t" style="left:1315px;top:1134.5px;font-family:'Liberation Sans';font-size:12px;transform:scaleX(0.8986);transform-origin:0 0;">151</div>
<div class="t" style="left:1350.8px;top:1134.5px;font-family:'Liberation Sans';font-size:12px;letter-spacing:-0.151px;">0x7fff1e1beb66</div>
<div class="t" style="left:90.3px;top:1149.5px;font-family:'Liberation Sans';font-size:12px;transform:scaleX(0.8982);transform-origin:0 0;">22</div>
<div class="t" style="left:114px;top:1149.5px;font-family:'Liberation Sans';font-size:12px;letter-spacing:-0.099px;">QQuickDesignerSupportProperties::propertyNameListForWritableProperties</div>
<div class="t" style="left:1105.2px;top:1149.5px;font-family:'Liberation Sans';font-size:12px;letter-spacing:0.023px;">qquickdesignersupportproperties.cpp</div>
<div class="t" style="left:1315px;top:1149.5px;font-family:'Liberation Sans';font-size:12px;transform:scaleX(0.8986);transform-origin:0 0;">151</div>
<div class="t" style="left:1350.8px;top:1149.5px;font-family:'Liberation Sans';font-size:12px;letter-spacing:-0.151px;">0x7fff1e1beb66</div>
<div class="t" style="left:90.3px;top:1164.5px;font-family:'Liberation Sans';font-size:12px;transform:scaleX(0.8982);transform-origin:0 0;">23</div>
<div class="t" style="left:114px;top:1164.5px;font-family:'Liberation Sans';font-size:12px;letter-spacing:-0.099px;">QQuickDesignerSupportProperties::propertyNameListForWritableProperties</div>
<div class="t" style="left:1105.2px;top:1164.5px;font-family:'Liberation Sans';font-size:12px;letter-spacing:0.023px;">qquickdesignersupportproperties.cpp</div>
<div class="t" style="left:1315px;top:1164.5px;font-family:'Liberation Sans';font-size:12px;transform:scaleX(0.8986);transform-origin:0 0;">151</div>
<div class="t" style="left:1350.8px;top:1164.5px;font-family:'Liberation Sans';font-size:12px;letter-spacing:-0.151px;">0x7fff1e1beb66</div>
<div class="t" style="left:90.3px;top:1179.5px;font-family:'Liberation Sans';font-size:12px;transform:scaleX(0.8982);transform-origin:0 0;">24</div>
<div class="t" style="left:114px;top:1179.5px;font-family:'Liberation Sans';font-size:12px;letter-spacing:-0.099px;">QQuickDesignerSupportProperties::propertyNameListForWritableProperties</div>
<div class="t" style="left:1105.2px;top:1179.5px;font-family:'Liberation Sans';font-size:12px;letter-spacing:0.023px;">qquickdesignersupportproperties.cpp</div>
<div class="t" style="left:1315px;top:1179.5px;font-family:'Liberation Sans';font-size:12px;transform:scaleX(0.8986);transform-origin:0 0;">151</div>
<div class="t" style="left:1350.8px;top:1179.5px;font-family:'Liberation Sans';font-size:12px;letter-spacing:-0.151px;">0x7fff1e1beb66</div>
<div class="t" style="left:90.3px;top:1194.5px;font-family:'Liberation Sans';font-size:12px;transform:scaleX(0.8982);transform-origin:0 0;">25</div>
<div class="t" style="left:114px;top:1194.5px;font-family:'Liberation Sans';font-size:12px;letter-spacing:-0.099px;">QQuickDesignerSupportProperties::propertyNameListForWritableProperties</div>
<div class="t" style="left:1105.2px;top:1194.5px;font-family:'Liberation Sans';font-size:12px;letter-spacing:0.023px;">qquickdesignersupportproperties.cpp</div>
<div class="t" style="left:1315px;top:1194.5px;font-family:'Liberation Sans';font-size:12px;transform:scaleX(0.8986);transform-origin:0 0;">151</div>
<div class="t" style="left:1350.8px;top:1194.5px;font-family:'Liberation Sans';font-size:12px;letter-spacing:-0.151px;">0x7fff1e1beb66</div>
<div class="t" style="left:90.3px;top:1209.5px;font-family:'Liberation Sans';font-size:12px;transform:scaleX(0.8982);transform-origin:0 0;">26</div>
<div class="t" style="left:114px;top:1209.5px;font-family:'Liberation Sans';font-size:12px;letter-spacing:-0.099px;">QQuickDesignerSupportProperties::propertyNameListForWritableProperties</div>
<div class="t" style="left:1105.2px;top:1209.5px;font-family:'Liberation Sans';font-size:12px;letter-spacing:0.023px;">qquickdesignersupportproperties.cpp</div>
<div class="t" style="left:1315px;top:1209.5px;font-family:'Liberation Sans';font-size:12px;transform:scaleX(0.8986);transform-origin:0 0;">151</div>
<div class="t" style="left:1350.8px;top:1209.5px;font-family:'Liberation Sans';font-size:12px;letter-spacing:-0.151px;">0x7fff1e1beb66</div>
<div class="t" style="left:90.3px;top:1224.5px;font-family:'Liberation Sans';font-size:12px;transform:scaleX(0.8982);transform-origin:0 0;">27</div>
<div class="t" style="left:114px;top:1224.5px;font-family:'Liberation Sans';font-size:12px;letter-spacing:-0.099px;">QQuickDesignerSupportProperties::propertyNameListForWritableProperties</div>
<div class="t" style="left:1105.2px;top:1224.5px;font-family:'Liberation Sans';font-size:12px;letter-spacing:0.023px;">qquickdesignersupportproperties.cpp</div>
<div class="t" style="left:1315px;top:1224.5px;font-family:'Liberation Sans';font-size:12px;transform:scaleX(0.8986);transform-origin:0 0;">151</div>
<div class="t" style="left:1350.8px;top:1224.5px;font-family:'Liberation Sans';font-size:12px;letter-spacing:-0.151px;">0x7fff1e1beb66</div>
<div class="t" style="left:90.3px;top:1239.5px;font-family:'Liberation Sans';font-size:12px;transform:scaleX(0.8982);transform-origin:0 0;">28</div>
<div class="t" style="left:114px;top:1239.5px;font-family:'Liberation Sans';font-size:12px;letter-spacing:-0.099px;">QQuickDesignerSupportProperties::propertyNameListForWritableProperties</div>
<div class="t" style="left:1105.2px;top:1239.5px;font-family:'Liberation Sans';font-size:12px;letter-spacing:0.023px;">qquickdesignersupportproperties.cpp</div>
<div class="t" style="left:1315px;top:1239.5px;font-family:'Liberation Sans';font-size:12px;transform:scaleX(0.8986);transform-origin:0 0;">151</div>
<div class="t" style="left:1350.8px;top:1239.5px;font-family:'Liberation Sans';font-size:12px;letter-spacing:-0.151px;">0x7fff1e1beb66</div>
<div class="t" style="left:90.3px;top:1254.5px;font-family:'Liberation Sans';font-size:12px;transform:scaleX(0.8982);transform-origin:0 0;">29</div>
<div class="t" style="left:114px;top:1254.5px;font-family:'Liberation Sans';font-size:12px;letter-spacing:-0.099px;">QQuickDesignerSupportProperties::propertyNameListForWritableProperties</div>
<div class="t" style="left:1105.2px;top:1254.5px;font-family:'Liberation Sans';font-size:12px;letter-spacing:0.023px;">qquickdesignersupportproperties.cpp</div>
<div class="t" style="left:1315px;top:1254.5px;font-family:'Liberation Sans';font-size:12px;transform:scaleX(0.8986);transform-origin:0 0;">151</div>
<div class="t" style="left:1350.8px;top:1254.5px;font-family:'Liberation Sans';font-size:12px;letter-spacing:-0.151px;">0x7fff1e1beb66</div>
<div class="t" style="left:90.3px;top:1269.5px;font-family:'Liberation Sans';font-size:12px;transform:scaleX(0.8982);transform-origin:0 0;">30</div>
<div class="t" style="left:114px;top:1269.5px;font-family:'Liberation Sans';font-size:12px;letter-spacing:-0.099px;">QQuickDesignerSupportProperties::propertyNameListForWritableProperties</div>
<div class="t" style="left:1105.2px;top:1269.5px;font-family:'Liberation Sans';font-size:12px;letter-spacing:0.023px;">qquickdesignersupportproperties.cpp</div>
<div class="t" style="left:1315px;top:1269.5px;font-family:'Liberation Sans';font-size:12px;transform:scaleX(0.8986);transform-origin:0 0;">151</div>
<div class="t" style="left:1350.8px;top:1269.5px;font-family:'Liberation Sans';font-size:12px;letter-spacing:-0.151px;">0x7fff1e1beb66</div>
<div class="t" style="left:90.3px;top:1284.5px;font-family:'Liberation Sans';font-size:12px;transform:scaleX(0.8982);transform-origin:0 0;">31</div>
<div class="t" style="left:114px;top:1284.5px;font-family:'Liberation Sans';font-size:12px;letter-spacing:-0.099px;">QQuickDesignerSupportProperties::propertyNameListForWritableProperties</div>
<div class="t" style="left:1105.2px;top:1284.5px;font-family:'Liberation Sans';font-size:12px;letter-spacing:0.023px;">qquickdesignersupportproperties.cpp</div>
<div class="t" style="left:1315px;top:1284.5px;font-family:'Liberation Sans';font-size:12px;transform:scaleX(0.8986);transform-origin:0 0;">151</div>
<div class="t" style="left:1350.8px;top:1284.5px;font-family:'Liberation Sans';font-size:12px;letter-spacing:-0.151px;">0x7fff1e1beb66</div>
<div class="t" style="left:90.3px;top:1299.5px;font-family:'Liberation Sans';font-size:12px;transform:scaleX(0.8982);transform-origin:0 0;">32</div>
<div class="t" style="left:114px;top:1299.5px;font-family:'Liberation Sans';font-size:12px;letter-spacing:-0.099px;">QQuickDesignerSupportProperties::propertyNameListForWritableProperties</div>
<div class="t" style="left:1105.2px;top:1299.5px;font-family:'Liberation Sans';font-size:12px;letter-spacing:0.023px;">qquickdesignersupportproperties.cpp</div>
<div class="t" style="left:1315px;top:1299.5px;font-family:'Liberation Sans';font-size:12px;transform:scaleX(0.8986);transform-origin:0 0;">151</div>
<div class="t" style="left:1350.8px;top:1299.5px;font-family:'Liberation Sans';font-size:12px;letter-spacing:-0.151px;">0x7fff1e1beb66</div>
<div class="t" style="left:90.3px;top:1314.5px;font-family:'Liberation Sans';font-size:12px;transform:scaleX(0.8982);transform-origin:0 0;">33</div>
<div class="t" style="left:114px;top:1314.5px;font-family:'Liberation Sans';font-size:12px;letter-spacing:-0.099px;">QQuickDesignerSupportProperties::propertyNameListForWritableProperties</div>
<div class="t" style="left:1105.2px;top:1314.5px;font-family:'Liberation Sans';font-size:12px;letter-spacing:0.023px;">qquickdesignersupportproperties.cpp</div>
<div class="t" style="left:1315px;top:1314.5px;font-family:'Liberation Sans';font-size:12px;transform:scaleX(0.8986);transform-origin:0 0;">151</div>
<div class="t" style="left:1350.8px;top:1314.5px;font-family:'Liberation Sans';font-size:12px;letter-spacing:-0.151px;">0x7fff1e1beb66</div>
<div class="t" style="left:90.3px;top:1329.5px;font-family:'Liberation Sans';font-size:12px;transform:scaleX(0.8982);transform-origin:0 0;">34</div>
<div class="t" style="left:114px;top:1329.5px;font-family:'Liberation Sans';font-size:12px;letter-spacing:-0.099px;">QQuickDesignerSupportProperties::propertyNameListForWritableProperties</div>
<div class="t" style="left:1105.2px;top:1329.5px;font-family:'Liberation Sans';font-size:12px;letter-spacing:0.023px;">qquickdesignersupportproperties.cpp</div>
<div class="t" style="left:1315px;top:1329.5px;font-family:'Liberation Sans';font-size:12px;transform:scaleX(0.8986);transform-origin:0 0;">151</div>
<div class="t" style="left:1350.8px;top:1329.5px;font-family:'Liberation Sans';font-size:12px;letter-spacing:-0.151px;">0x7fff1e1beb66</div>
<div class="t" style="left:90.3px;top:1344.5px;font-family:'Liberation Sans';font-size:12px;transform:scaleX(0.8982);transform-origin:0 0;">35</div>
<div class="t" style="left:114px;top:1344.5px;font-family:'Liberation Sans';font-size:12px;letter-spacing:-0.099px;">QQuickDesignerSupportProperties::propertyNameListForWritableProperties</div>
<div class="t" style="left:1105.2px;top:1344.5px;font-family:'Liberation Sans';font-size:12px;letter-spacing:0.023px;">qquickdesignersupportproperties.cpp</div>
<div class="t" style="left:1315px;top:1344.5px;font-family:'Liberation Sans';font-size:12px;transform:scaleX(0.8986);transform-origin:0 0;">151</div>
<div class="t" style="left:1350.8px;top:1344.5px;font-family:'Liberation Sans';font-size:12px;letter-spacing:-0.151px;">0x7fff1e1beb66</div>
<div class="t" style="left:90.3px;top:1359.5px;font-family:'Liberation Sans';font-size:12px;transform:scaleX(0.8982);transform-origin:0 0;">36</div>
<div class="t" style="left:114px;top:1359.5px;font-family:'Liberation Sans';font-size:12px;letter-spacing:-0.099px;">QQuickDesignerSupportProperties::propertyNameListForWritableProperties</div>
<div class="t" style="left:1105.2px;top:1359.5px;font-family:'Liberation Sans';font-size:12px;letter-spacing:0.023px;">qquickdesignersupportproperties.cpp</div>
<div class="t" style="left:1315px;top:1359.5px;font-family:'Liberation Sans';font-size:12px;transform:scaleX(0.8986);transform-origin:0 0;">151</div>
<div class="t" style="left:1350.8px;top:1359.5px;font-family:'Liberation Sans';font-size:12px;letter-spacing:-0.151px;">0x7fff1e1beb66</div>
<div class="t" style="left:90.3px;top:1374.5px;font-family:'Liberation Sans';font-size:12px;transform:scaleX(0.8982);transform-origin:0 0;">37</div>
<div class="t" style="left:114px;top:1374.5px;font-family:'Liberation Sans';font-size:12px;letter-spacing:-0.099px;">QQuickDesignerSupportProperties::propertyNameListForWritableProperties</div>
<div class="t" style="left:1105.2px;top:1374.5px;font-family:'Liberation Sans';font-size:12px;letter-spacing:0.023px;">qquickdesignersupportproperties.cpp</div>
<div class="t" style="left:1315px;top:1374.5px;font-family:'Liberation Sans';font-size:12px;transform:scaleX(0.8986);transform-origin:0 0;">151</div>
<div class="t" style="left:1350.8px;top:1374.5px;font-family:'Liberation Sans';font-size:12px;letter-spacing:-0.151px;">0x7fff1e1beb66</div>
<div class="t" style="left:90.3px;top:1389.5px;font-family:'Liberation Sans';font-size:12px;transform:scaleX(0.8982);transform-origin:0 0;">38</div>
<div class="t" style="left:114px;top:1389.5px;font-family:'Liberation Sans';font-size:12px;letter-spacing:-0.099px;">QQuickDesignerSupportProperties::propertyNameListForWritableProperties</div>
<div class="t" style="left:1105.2px;top:1389.5px;font-family:'Liberation Sans';font-size:12px;letter-spacing:0.023px;">qquickdesignersupportproperties.cpp</div>
<div class="t" style="left:1315px;top:1389.5px;font-family:'Liberation Sans';font-size:12px;transform:scaleX(0.8986);transform-origin:0 0;">151</div>
<div class="t" style="left:1350.8px;top:1389.5px;font-family:'Liberation Sans';font-size:12px;letter-spacing:-0.151px;">0x7fff1e1beb66</div>
<div class="t" style="left:90.3px;top:1404.5px;font-family:'Liberation Sans';font-size:12px;transform:scaleX(0.8982);transform-origin:0 0;">39</div>
<div class="t" style="left:114px;top:1404.5px;font-family:'Liberation Sans';font-size:12px;letter-spacing:-0.099px;">QQuickDesignerSupportProperties::propertyNameListForWritableProperties</div>
<div class="t" style="left:1105.2px;top:1404.5px;font-family:'Liberation Sans';font-size:12px;letter-spacing:0.023px;">qquickdesignersupportproperties.cpp</div>
<div class="t" style="left:1315px;top:1404.5px;font-family:'Liberation Sans';font-size:12px;transform:scaleX(0.8986);transform-origin:0 0;">151</div>
<div class="t" style="left:1350.8px;top:1404.5px;font-family:'Liberation Sans';font-size:12px;letter-spacing:-0.151px;">0x7fff1e1beb66</div>
<div class="t" style="left:90.3px;top:1419.5px;font-family:'Liberation Sans';font-size:12px;transform:scaleX(0.8982);transform-origin:0 0;">40</div>
<div class="t" style="left:114px;top:1419.5px;font-family:'Liberation Sans';font-size:12px;letter-spacing:-0.099px;">QQuickDesignerSupportProperties::propertyNameListForWritableProperties</div>
<div class="t" style="left:1105.2px;top:1419.5px;font-family:'Liberation Sans';font-size:12px;letter-spacing:0.023px;">qquickdesignersupportproperties.cpp</div>
<div class="t" style="left:1315px;top:1419.5px;font-family:'Liberation Sans';font-size:12px;transform:scaleX(0.8986);transform-origin:0 0;">151</div>
<div class="t" style="left:1350.8px;top:1419.5px;font-family:'Liberation Sans';font-size:12px;letter-spacing:-0.151px;">0x7fff1e1beb66</div>
<div class="t" style="left:90.3px;top:1434.5px;font-family:'Liberation Sans';font-size:12px;transform:scaleX(0.8982);transform-origin:0 0;">41</div>
<div class="t" style="left:114px;top:1434.5px;font-family:'Liberation Sans';font-size:12px;letter-spacing:-0.099px;">QQuickDesignerSupportProperties::propertyNameListForWritableProperties</div>
<div class="t" style="left:1105.2px;top:1434.5px;font-family:'Liberation Sans';font-size:12px;letter-spacing:0.023px;">qquickdesignersupportproperties.cpp</div>
<div class="t" style="left:1315px;top:1434.5px;font-family:'Liberation Sans';font-size:12px;transform:scaleX(0.8986);transform-origin:0 0;">151</div>
<div class="t" style="left:1350.8px;top:1434.5px;font-family:'Liberation Sans';font-size:12px;letter-spacing:-0.151px;">0x7fff1e1beb66</div>
<div class="t" style="left:90.3px;top:1449.5px;font-family:'Liberation Sans';font-size:12px;transform:scaleX(0.8982);transform-origin:0 0;">42</div>
<div class="t" style="left:114px;top:1449.5px;font-family:'Liberation Sans';font-size:12px;letter-spacing:-0.099px;">QQuickDesignerSupportProperties::propertyNameListForWritableProperties</div>
<div class="t" style="left:1105.2px;top:1449.5px;font-family:'Liberation Sans';font-size:12px;letter-spacing:0.023px;">qquickdesignersupportproperties.cpp</div>
<div class="t" style="left:1315px;top:1449.5px;font-family:'Liberation Sans';font-size:12px;transform:scaleX(0.8986);transform-origin:0 0;">151</div>
<div class="t" style="left:1350.8px;top:1449.5px;font-family:'Liberation Sans';font-size:12px;letter-spacing:-0.151px;">0x7fff1e1beb66</div>
<div class="t" style="left:90.3px;top:1464.5px;font-family:'Liberation Sans';font-size:12px;transform:scaleX(0.8982);transform-origin:0 0;">43</div>
<div class="t" style="left:114px;top:1464.5px;font-family:'Liberation Sans';font-size:12px;letter-spacing:-0.099px;">QQuickDesignerSupportProperties::propertyNameListForWritableProperties</div>
<div class="t" style="left:1105.2px;top:1464.5px;font-family:'Liberation Sans';font-size:12px;letter-spacing:0.023px;">qquickdesignersupportproperties.cpp</div>
<div class="t" style="left:1315px;top:1464.5px;font-family:'Liberation Sans';font-size:12px;transform:scaleX(0.8986);transform-origin:0 0;">151</div>
<div class="t" style="left:1350.8px;top:1464.5px;font-family:'Liberation Sans';font-size:12px;letter-spacing:-0.151px;">0x7fff1e1beb66</div>
<div class="t" style="left:90.3px;top:1479.5px;font-family:'Liberation Sans';font-size:12px;transform:scaleX(0.8982);transform-origin:0 0;">44</div>
<div class="t" style="left:114px;top:1479.5px;font-family:'Liberation Sans';font-size:12px;letter-spacing:-0.099px;">QQuickDesignerSupportProperties::propertyNameListForWritableProperties</div>
<div class="t" style="left:1105.2px;top:1479.5px;font-family:'Liberation Sans';font-size:12px;letter-spacing:0.023px;">qquickdesignersupportproperties.cpp</div>
<div class="t" style="left:1315px;top:1479.5px;font-family:'Liberation Sans';font-size:12px;transform:scaleX(0.8986);transform-origin:0 0;">151</div>
<div class="t" style="left:1350.8px;top:1479.5px;font-family:'Liberation Sans';font-size:12px;letter-spacing:-0.151px;">0x7fff1e1beb66</div>
<div class="t" style="left:90.3px;top:1494.5px;font-family:'Liberation Sans';font-size:12px;transform:scaleX(0.8982);transform-origin:0 0;">45</div>
<div class="t" style="left:114px;top:1494.5px;font-family:'Liberation Sans';font-size:12px;letter-spacing:-0.099px;">QQuickDesignerSupportProperties::propertyNameListForWritableProperties</div>
<div class="t" style="left:1105.2px;top:1494.5px;font-family:'Liberation Sans';font-size:12px;letter-spacing:0.023px;">qquickdesignersupportproperties.cpp</div>
<div class="t" style="left:1315px;top:1494.5px;font-family:'Liberation Sans';font-size:12px;transform:scaleX(0.8986);transform-origin:0 0;">151</div>
<div class="t" style="left:1350.8px;top:1494.5px;font-family:'Liberation Sans';font-size:12px;letter-spacing:-0.151px;">0x7fff1e1beb66</div>
<div class="t" style="left:90.3px;top:1509.5px;font-family:'Liberation Sans';font-size:12px;transform:scaleX(0.8982);transform-origin:0 0;">46</div>
<div class="t" style="left:114px;top:1509.5px;font-family:'Liberation Sans';font-size:12px;letter-spacing:-0.099px;">QQuickDesignerSupportProperties::propertyNameListForWritableProperties</div>
<div class="t" style="left:1105.2px;top:1509.5px;font-family:'Liberation Sans';font-size:12px;letter-spacing:0.023px;">qquickdesignersupportproperties.cpp</div>
<div class="t" style="left:1315px;top:1509.5px;font-family:'Liberation Sans';font-size:12px;transform:scaleX(0.8986);transform-origin:0 0;">151</div>
<div class="t" style="left:1350.8px;top:1509.5px;font-family:'Liberation Sans';font-size:12px;letter-spacing:-0.151px;">0x7fff1e1beb66</div>
<div class="t" style="left:90.3px;top:1524.5px;font-family:'Liberation Sans';font-size:12px;transform:scaleX(0.8982);transform-origin:0 0;">47</div>
<div class="t" style="left:114px;top:1524.5px;font-family:'Liberation Sans';font-size:12px;letter-spacing:-0.099px;">QQuickDesignerSupportProperties::propertyNameListForWritableProperties</div>
<div class="t" style="left:1105.2px;top:1524.5px;font-family:'Liberation Sans';font-size:12px;letter-spacing:0.023px;">qquickdesignersupportproperties.cpp</div>
<div class="t" style="left:1315px;top:1524.5px;font-family:'Liberation Sans';font-size:12px;transform:scaleX(0.8986);transform-origin:0 0;">151</div>
<div class="t" style="left:1350.8px;top:1524.5px;font-family:'Liberation Sans';font-size:12px;letter-spacing:-0.151px;">0x7fff1e1beb66</div>
<div class="t" style="left:90.3px;top:1539.5px;font-family:'Liberation Sans';font-size:12px;transform:scaleX(0.8982);transform-origin:0 0;clip-path:inset(0 0 11px 0)">48</div>
<div class="t" style="left:114px;top:1539.5px;font-family:'Liberation Sans';font-size:12px;letter-spacing:-0.099px;clip-path:inset(0 0 11px 0)">QQuickDesignerSupportProperties::propertyNameListForWritableProperties</div>
<div class="t" style="left:1105.2px;top:1539.5px;font-family:'Liberation Sans';font-size:12px;letter-spacing:0.023px;clip-path:inset(0 0 11px 0)">qquickdesignersupportproperties.cpp</div>
<div class="t" style="left:1315px;top:1539.5px;font-family:'Liberation Sans';font-size:12px;transform:scaleX(0.8986);transform-origin:0 0;clip-path:inset(0 0 11px 0)">151</div>
<div class="t" style="left:1350.8px;top:1539.5px;font-family:'Liberation Sans';font-size:12px;letter-spacing:-0.151px;clip-path:inset(0 0 11px 0)">0x7fff1e1beb66</div>
<svg class="a" style="left:74.5px;top:1139px;" width="9" height="6.5" viewBox="0 0 9 6.5"><path d="M0 2.100h4.200v-2.100l4.300 3.100-4.300 3.100v-2.100h-4.200z" fill="#cbbf6c"/></svg>
<div class="a" style="left:1441px;top:877px;width:13px;height:667px;background:#48494b;"></div>
<div class="a" style="left:1441px;top:892px;width:13px;height:29px;background:#303133;"></div>
<div class="sbh" style="left:1441px;top:877px;width:13px;height:13px"></div>
<svg class="a" style="left:1443.5px;top:881px;" width="8" height="5" viewBox="0 0 8 5"><path d="M0 4.500h8l-4-4.500z" fill="#a4a5a6"/></svg>
<div class="sbh" style="left:1441px;top:1531px;width:13px;height:13px"></div>
<svg class="a" style="left:1443.5px;top:1535px;" width="8" height="5" viewBox="0 0 8 5"><path d="M0 0h8l-4 4.500z" fill="#a4a5a6"/></svg>
<div class="sbh" style="left:1441px;top:893px;width:13px;height:27px"></div>
<div class="a" style="left:1454px;top:876px;width:1px;height:669px;background:#0c0e10;"></div>
<div class="a" style="left:1455px;top:876px;width:465px;height:669px;background:#2e2f30;"></div>
<div class="hd" style="left:1455px;top:876px;width:465px">
<div class="hs" style="left:98.5px"></div>
<div class="hs" style="left:153.5px"></div>
<div class="hs" style="left:253.5px"></div>
<div class="hs" style="left:353.5px"></div>
<div class="hs" style="left:453.5px"></div>
</div>
<div class="t" style="left:1457.5px;top:877.5px;font-family:'Liberation Sans';font-size:12px;color:#d4d4d4;">Number</div>
<div class="t" style="left:1557.5px;top:877.5px;font-family:'Liberation Sans';font-size:12px;color:#d4d4d4;">Function</div>
<div class="t" style="left:1612.5px;top:877.5px;font-family:'Liberation Sans';font-size:12px;color:#d4d4d4;">File</div>
<div class="t" style="left:1712.5px;top:877.5px;font-family:'Liberation Sans';font-size:12px;color:#d4d4d4;">Line</div>
<div class="t" style="left:1812.5px;top:877.5px;font-family:'Liberation Sans';font-size:12px;color:#d4d4d4;">Address</div>
<div class="t" style="left:1912.5px;top:877.5px;font-family:'Liberation Sans';font-size:12px;color:#d4d4d4;">C</div>
<div class="a" style="left:1456px;top:1506px;width:464px;height:13px;background:#48494b;"></div>
<div class="a" style="left:1468px;top:1506px;width:270px;height:13px;background:#303133;"></div>
<div class="sbh" style="left:1456px;top:1506px;width:13px;height:13px"></div>
<svg class="a" style="left:1460px;top:1508.5px;" width="5" height="8" viewBox="0 0 5 8"><path d="M4.500 0v8l-4.500-4z" fill="#a4a5a6"/></svg>
<div class="sbh" style="left:1907px;top:1506px;width:13px;height:13px"></div>
<svg class="a" style="left:1911px;top:1508.5px;" width="5" height="8" viewBox="0 0 5 8"><path d="M0 0v8l4.500-4z" fill="#a4a5a6"/></svg>
<div class="sbh" style="left:1469px;top:1506px;width:268px;height:13px"></div>
<div class="a" style="left:1456px;top:1521px;width:78px;height:21px;background:#2e2f30;border:1px solid #4a4b4d;border-top:none;border-radius:0 0 3px 3px"></div>
<div class="a" style="left:1536px;top:1521px;width:61px;height:19px;background:#2e2f30;border:1px solid #4a4b4d;border-top:none;border-radius:0 0 3px 3px"></div>
<div class="t" style="left:1466px;top:1524px;font-family:'Liberation Sans';font-size:12px;transform:scaleX(0.8931);transform-origin:0 0;">Breakpoints</div>
<div class="t" style="left:1546.5px;top:1523px;font-family:'Liberation Sans';font-size:12px;transform:scaleX(0.8744);transform-origin:0 0;">Threads</div>
<div class="a" style="left:1545px;top:45px;width:375px;height:808px;background:#2e2f30;"></div>
<div class="hd" style="left:1545px;top:45px;width:375px">
<div class="hs" style="left:128.5px"></div>
</div>
<div class="t" style="left:1547.5px;top:46.5px;font-family:'Liberation Sans';font-size:12px;color:#d4d4d4;">Name</div>
<div class="t" style="left:1677.5px;top:46.5px;font-family:'Liberation Sans';font-size:12px;color:#d4d4d4;">Value</div>
<svg class="a" style="left:1552px;top:67px;" width="5" height="9" viewBox="0 0 5 9"><path d="M0 0v8.500l4.500-4.250z" fill="#a0a1a2"/></svg>
<div class="t" style="left:1566px;top:63.5px;font-family:'Liberation Sans';font-size:12px;letter-spacing:-0.189px;">*baseName</div>
<div class="t" style="left:1678.5px;top:63.5px;font-family:'Liberation Sans';font-size:12px;transform:scaleX(1.0403);transform-origin:0 0;">&quot;myproperty.myproperty.myproperty.myprop</div>
<svg class="a" style="left:1552px;top:82px;" width="5" height="9" viewBox="0 0 5 9"><path d="M0 0v8.500l4.500-4.250z" fill="#a0a1a2"/></svg>
<div class="t" style="left:1566px;top:78.5px;font-family:'Liberation Sans';font-size:12px;letter-spacing:0.164px;">*childObject</div>
<div class="t" style="left:1678.5px;top:78.5px;font-family:'Liberation Sans';font-size:12px;transform:scaleX(0.9282);transform-origin:0 0;color:#55575a;">@0x202ebfc5e50</div>
<svg class="a" style="left:1552px;top:97px;" width="5" height="9" viewBox="0 0 5 9"><path d="M0 0v8.500l4.500-4.250z" fill="#a0a1a2"/></svg>
<div class="t" style="left:1566px;top:93.5px;font-family:'Liberation Sans';font-size:12px;letter-spacing:-0.057px;">declarativeProperty</div>
<div class="t" style="left:1678.5px;top:93.5px;font-family:'Liberation Sans';font-size:12px;transform:scaleX(0.9007);transform-origin:0 0;color:#55575a;">@0x9983626468</div>
<div class="t" style="left:1566px;top:108.5px;font-family:'Liberation Sans';font-size:12px;letter-spacing:-0.138px;">index</div>
<div class="t" style="left:1678.5px;top:108.5px;font-family:'Liberation Sans';font-size:12px;">1</div>
<svg class="a" style="left:1552px;top:127px;" width="5" height="9" viewBox="0 0 5 9"><path d="M0 0v8.500l4.500-4.250z" fill="#a0a1a2"/></svg>
<div class="t" style="left:1566px;top:123.5px;font-family:'Liberation Sans';font-size:12px;letter-spacing:-0.043px;">*inspectedObjects</div>
<div class="t" style="left:1678.5px;top:123.5px;font-family:'Liberation Sans';font-size:12px;letter-spacing:-0.134px;">&lt;1 items&gt;</div>
<div class="t" style="left:1566px;top:138.5px;font-family:'Liberation Sans';font-size:12px;letter-spacing:-0.003px;">localObjectList</div>
<div class="t" style="left:1678.5px;top:138.5px;font-family:'Liberation Sans';font-size:12px;letter-spacing:-0.134px;">&lt;0 items&gt;</div>
<svg class="a" style="left:1552px;top:157px;" width="5" height="9" viewBox="0 0 5 9"><path d="M0 0v8.500l4.500-4.250z" fill="#a0a1a2"/></svg>
<div class="t" style="left:1566px;top:153.5px;font-family:'Liberation Sans';font-size:12px;letter-spacing:0.088px;">*metaObject</div>
<div class="t" style="left:1678.5px;top:153.5px;font-family:'Liberation Sans';font-size:12px;transform:scaleX(0.9176);transform-origin:0 0;color:#55575a;">@0x202ec0553f8</div>
<svg class="a" style="left:1552px;top:172px;" width="5" height="9" viewBox="0 0 5 9"><path d="M0 0v8.500l4.500-4.250z" fill="#a0a1a2"/></svg>
<div class="t" style="left:1566px;top:168.5px;font-family:'Liberation Sans';font-size:12px;letter-spacing:-0.003px;">metaProperty</div>
<div class="t" style="left:1678.5px;top:168.5px;font-family:'Liberation Sans';font-size:12px;letter-spacing:0.147px;">myproperty</div>
<svg class="a" style="left:1552px;top:187px;" width="5" height="9" viewBox="0 0 5 9"><path d="M0 0v8.500l4.500-4.250z" fill="#a0a1a2"/></svg>
<div class="t" style="left:1566px;top:183.5px;font-family:'Liberation Sans';font-size:12px;letter-spacing:0.157px;">*object</div>
<div class="t" style="left:1678.5px;top:183.5px;font-family:'Liberation Sans';font-size:12px;transform:scaleX(0.9282);transform-origin:0 0;color:#55575a;">@0x202ebfc5e50</div>
<div class="t" style="left:1566px;top:198.5px;font-family:'Liberation Sans';font-size:12px;letter-spacing:0.005px;">propertyNameList</div>
<div class="t" style="left:1678.5px;top:198.5px;font-family:'Liberation Sans';font-size:12px;letter-spacing:-0.134px;">&lt;0 items&gt;</div>
<div class="a" style="left:1545px;top:728px;width:375px;height:13px;background:#48494b;"></div>
<div class="a" style="left:1558px;top:728px;width:130px;height:13px;background:#303133;"></div>
<div class="sbh" style="left:1545px;top:728px;width:13px;height:13px"></div>
<svg class="a" style="left:1549px;top:730.5px;" width="5" height="8" viewBox="0 0 5 8"><path d="M4.500 0v8l-4.500-4z" fill="#a4a5a6"/></svg>
<div class="sbh" style="left:1907px;top:728px;width:13px;height:13px"></div>
<svg class="a" style="left:1911px;top:730.5px;" width="5" height="8" viewBox="0 0 5 8"><path d="M0 0v8l4.500-4z" fill="#a4a5a6"/></svg>
<div class="sbh" style="left:1559px;top:728px;width:128px;height:13px"></div>
<div class="hd" style="left:1545px;top:742px;width:375px">
<div class="hs" style="left:98.5px"></div>
<div class="hs" style="left:198.5px"></div>
</div>
<div class="t" style="left:1547.5px;top:743.5px;font-family:'Liberation Sans';font-size:12px;color:#d4d4d4;">Name</div>
<div class="t" style="left:1647.5px;top:743.5px;font-family:'Liberation Sans';font-size:12px;color:#d4d4d4;">Value</div>
<div class="t" style="left:1747.5px;top:743.5px;font-family:'Liberation Sans';font-size:12px;color:#d4d4d4;">Type</div>
<div class="a" style="left:71px;top:1544px;width:1849px;height:26px;background:#404244;"></div>
<div class="a" style="left:71px;top:1543px;width:1849px;height:1px;background:#1c1d1e;"></div>
<svg class="a" style="left:79px;top:1552px;" width="12" height="12" viewBox="0 0 12 12"><rect x=".5" y=".5" width="11" height="11" fill="none" stroke="#d0d0d0"/><rect x="0" y="0" width="5" height="12" fill="#d0d0d0"/></svg>
<div class="a" style="left:103px;top:1547px;width:200px;height:21px;background:#2e2f30;"></div>
<svg class="a" style="left:109px;top:1550px;" width="16" height="15" viewBox="0 0 16 15"><circle cx="9" cy="5.500" r="4.200" fill="none" stroke="#c4c4c4" stroke-width="1.300"/><path d="M6 8.500l-4.800 5" stroke="#c4c4c4" stroke-width="1.700"/><path d="M10 12h4l-2 2z" fill="#c4c4c4"/></svg>
<div class="a" style="left:127.500px;top:1547px;width:150px;height:21px;overflow:hidden">
</div>
<div class="t" style="left:125.5px;top:1549.5px;font-family:'Liberation Sans';font-size:12px;letter-spacing:0.027px;clip-path:inset(0 0 0 2px)">signersupportproperties.cpp</div>
<svg class="a" style="left:282px;top:1551px;" width="14" height="14" viewBox="0 0 14 14"><circle cx="7" cy="7" r="7" fill="#c8c8c8"/><path d="M4.300 4.300l5.400 5.400M9.700 4.300l-5.400 5.400" stroke="#2e2f30" stroke-width="1.800"/></svg>
<div class="a" style="left:306px;top:1548px;width:1px;height:20px;background:#5a5c5e;"></div>
<div class="t" style="left:317px;top:1550.2px;font-family:'Liberation Sans';font-size:12px;transform:scaleX(0.8972);transform-origin:0 0;">1</div>
<div class="t" style="left:329.5px;top:1550.2px;font-family:'Liberation Sans';font-size:12px;transform:scaleX(0.8793);transform-origin:0 0;">Issues</div>
<div class="t" style="left:395px;top:1550.2px;font-family:'Liberation Sans';font-size:12px;letter-spacing:-0.188px;">2</div>
<div class="t" style="left:408px;top:1550.2px;font-family:'Liberation Sans';font-size:12px;transform:scaleX(0.8786);transform-origin:0 0;">Search Results</div>
<div class="t" style="left:497px;top:1550.2px;font-family:'Liberation Sans';font-size:12px;letter-spacing:-0.188px;">3</div>
<div class="t" style="left:510.5px;top:1550.2px;font-family:'Liberation Sans';font-size:12px;transform:scaleX(0.9178);transform-origin:0 0;">Application Output</div>
<div class="t" style="left:617.5px;top:1550.2px;font-family:'Liberation Sans';font-size:12px;letter-spacing:-0.188px;">4</div>
<div class="t" style="left:630.5px;top:1550.2px;font-family:'Liberation Sans';font-size:12px;transform:scaleX(0.8936);transform-origin:0 0;">Compile Output</div>
<div class="t" style="left:722px;top:1550.2px;font-family:'Liberation Sans';font-size:12px;letter-spacing:-0.188px;">5</div>
<div class="t" style="left:735.5px;top:1550.2px;font-family:'Liberation Sans';font-size:12px;transform:scaleX(0.8684);transform-origin:0 0;">QML Debugger Console</div>
<div class="t" style="left:865px;top:1550.2px;font-family:'Liberation Sans';font-size:12px;letter-spacing:-0.188px;">6</div>
<div class="t" style="left:878px;top:1550.2px;font-family:'Liberation Sans';font-size:12px;transform:scaleX(0.8737);transform-origin:0 0;">General Messages</div>
<div class="a" style="left:363px;top:1552px;width:16px;height:12px;border-radius:6px;background:#b4b4b4"></div>
<div class="t" style="left:368.5px;top:1550px;font-family:'Liberation Sans';font-size:11px;font-weight:bold;color:#ffffff;">1</div>
<svg class="a" style="left:984px;top:1552.5px;" width="8" height="11" viewBox="0 0 8 11"><path d="M0 4.500l3.750-4.500 3.750 4.500zM0 5.900l3.750 4.500 3.750-4.500z" fill="#c6c6c6"/></svg>
<div class="a" style="left:1865px;top:1547px;width:24px;height:21px;background:#1f2021;"></div>
<svg class="a" style="left:1870px;top:1551px;" width="14" height="12" viewBox="0 0 14 12"><path d="M9.500 3.500h4l-2-2.500z" fill="#d0d0d0"/><rect x=".5" y="6.500" width="12" height="3.500" rx="1.500" fill="none" stroke="#d0d0d0" stroke-width="1.200"/><rect x="1" y="7" width="8" height="2.500" fill="#d0d0d0"/></svg>
<svg class="a" style="left:1901.5px;top:1552px;" width="12" height="12" viewBox="0 0 12 12"><rect x=".5" y=".5" width="11" height="11" fill="none" stroke="#5c5e60"/><rect x="7" y="0" width="5" height="12" fill="#5c5e60"/></svg>
<div class="a" style="left:0px;top:225px;width:70px;height:52px;background:#1f2021;"></div>
<div class="a" style="left:0px;top:225px;width:2px;height:52px;background:#c8c8c8;"></div>
<svg class="a" style="left:25px;top:80.5px;" width="20" height="20" viewBox="0 0 20 20"><rect x="0.0" y="0.0" width="5.200" height="5.200" fill="#c6c6c6"/><rect x="7.2" y="0.0" width="5.200" height="5.200" fill="#c6c6c6"/><rect x="14.4" y="0.0" width="5.200" height="5.200" fill="#c6c6c6"/><rect x="0.0" y="7.2" width="5.200" height="5.200" fill="#c6c6c6"/><rect x="7.2" y="7.2" width="5.200" height="5.200" fill="#c6c6c6"/><rect x="14.4" y="7.2" width="5.200" height="5.200" fill="#c6c6c6"/><rect x="0.0" y="14.4" width="5.200" height="5.200" fill="#c6c6c6"/><rect x="7.2" y="14.4" width="5.200" height="5.200" fill="#c6c6c6"/><rect x="14.4" y="14.4" width="5.200" height="5.200" fill="#c6c6c6"/></svg>
<svg class="a" style="left:25px;top:133px;" width="20" height="19" viewBox="0 0 20 19"><rect width="19.100" height="19" fill="#c6c6c6"/><path d="M4 5.500h11M4 7.500h11M4 9.500h9M4 11.500h11M4 13.500h9" stroke="#303234" stroke-width="1"/></svg>
<svg class="a" style="left:23.5px;top:184px;" width="21" height="21" viewBox="0 0 21 21"><path d="M0 21l1.500-5.500 11.500-11.500 4 4-11.500 11.500zM14.500 2.500l2-2 4 4-2 2z" fill="#5e6062"/></svg>
<svg class="a" style="left:23px;top:236px;" width="23" height="21" viewBox="0 0 23 21"><g fill="#a2abf1" stroke="none"><ellipse cx="11.3" cy="12.3" rx="8.4" ry="8.3"/><path d="M7.4 4.300Q11.300 -1.300 15.200 4.300Q11.300 7.200 7.400 4.300z"/><path d="M6 8.300l-3.200-3M16.600 8.300l3.200-3M4 11.600h-2.800M18.600 11.600h2.800M6 15.800l-3 2.500M16.600 15.800l3 2.500" stroke="#a2abf1" stroke-width="1.500" stroke-linecap="round"/></g><path d="M5.800 3.600l5.500 3.400 5.500-3.400M11.300 7v14" stroke="#1f2021" stroke-width="1.100" fill="none"/></svg>
<svg class="a" style="left:56px;top:245.2px;" width="5" height="8" viewBox="0 0 5 8"><path d="M0 0v8l4.500-4z" fill="#d0d0d0"/></svg>
<svg class="a" style="left:24.5px;top:289px;" width="21" height="21" viewBox="0 0 21 21"><path d="M20 4.500a5.500 5.500 0 0 1-7.500 6l-9 9a1.900 1.900 0 0 1-2.800-2.800l9-9a5.500 5.500 0 0 1 6-7.500l-3.200 3.300.8 3.200 3.200.8z" fill="#c6c6c6"/></svg>
<svg class="a" style="left:25px;top:340.5px;" width="21" height="21" viewBox="0 0 21 21"><circle cx="10.500" cy="10.500" r="10.300" fill="#c6c6c6"/><text x="10.500" y="15.500" text-anchor="middle" font-family="Liberation Sans" font-weight="bold" font-size="15" fill="#404244">?</text></svg>
<div class="t" style="left:12.3px;top:103.8px;font-family:'Liberation Sans';font-size:9.6px;font-weight:bold;transform:scaleX(1.0655);transform-origin:0 0;color:#d4d4d4;">Welcome</div>
<div class="t" style="left:25px;top:156.3px;font-family:'Liberation Sans';font-size:9.6px;font-weight:bold;transform:scaleX(1.0483);transform-origin:0 0;color:#d4d4d4;">Edit</div>
<div class="t" style="left:18.5px;top:208.3px;font-family:'Liberation Sans';font-size:9.6px;font-weight:bold;transform:scaleX(1.0469);transform-origin:0 0;color:#696b6d;">Design</div>
<div class="t" style="left:19.5px;top:260.2px;font-family:'Liberation Sans';font-size:9.6px;font-weight:bold;transform:scaleX(1.0549);transform-origin:0 0;color:#e4e4e4;">Debug</div>
<div class="t" style="left:14.5px;top:312.4px;font-family:'Liberation Sans';font-size:9.6px;font-weight:bold;transform:scaleX(1.0957);transform-origin:0 0;color:#d4d4d4;">Projects</div>
<div class="t" style="left:23.5px;top:364.3px;font-family:'Liberation Sans';font-size:9.6px;font-weight:bold;transform:scaleX(1.0819);transform-origin:0 0;color:#d4d4d4;">Help</div>
<div class="a" style="left:0px;top:1358px;width:70px;height:1px;background:#595b5d;"></div>
<div class="t" style="left:29px;top:1363.7px;font-family:'Liberation Sans';font-size:10.5px;transform:scaleX(1.0817);transform-origin:0 0;color:#d4d4d4;">Qt</div>
<svg class="a" style="left:23px;top:1385.5px;" width="24" height="25" viewBox="0 0 24 25"><rect x=".8" y=".8" width="22.400" height="16.400" rx="1.500" fill="#5a5c5e" stroke="#c6c6c6" stroke-width="1.700"/><path d="M9.500 18h5l2.500 5h-10z" fill="#c6c6c6"/><rect x="6" y="22.500" width="12" height="2" fill="#c6c6c6"/></svg>
<svg class="a" style="left:56px;top:1399.5px;" width="5" height="8" viewBox="0 0 5 8"><path d="M0 0v8l4.500-4z" fill="#d0d0d0"/></svg>
<div class="t" style="left:3px;top:1416.7px;font-family:'Liberation Sans';font-size:9.6px;font-weight:bold;transform:scaleX(1.1272);transform-origin:0 0;color:#dcdcdc;">RelWithDe...</div>
<div class="t" style="left:16.5px;top:1428.6px;font-family:'Liberation Sans';font-size:9.6px;font-weight:bold;transform:scaleX(1.1769);transform-origin:0 0;color:#dcdcdc;">...bInfo</div>
<svg class="a" style="left:26px;top:1455px;" width="19" height="22" viewBox="0 0 19 22"><path d="M0 0l18.500 11-18.500 11z" fill="#92be6a"/></svg>
<svg class="a" style="left:20px;top:1490px;" width="32" height="66" viewBox="0 0 32 66"><rect x="5.800" y="4.800" width="7.300" height="18.200" fill="#6f80d2"/><path d="M15.800 4.800l9.200 9.200-9.200 9z" fill="#8dc86f"/><g transform="translate(10.600,13.600) scale(.62)"><g stroke="#404244" stroke-width="3.500" stroke-linejoin="round"><g fill="#404244" stroke="none"><ellipse cx="11.3" cy="12.3" rx="8.4" ry="8.3"/><path d="M7.4 4.300Q11.300 -1.300 15.200 4.300Q11.300 7.200 7.400 4.300z"/><path d="M6 8.300l-3.200-3M16.600 8.300l3.200-3M4 11.600h-2.800M18.600 11.600h2.800M6 15.800l-3 2.500M16.600 15.800l3 2.500" stroke="#404244" stroke-width="1.500" stroke-linecap="round"/></g><path d="M5.800 3.600l5.500 3.400 5.500-3.400M11.300 7v14" stroke="#404244" stroke-width="1.100" fill="none"/></g><g fill="#d2d2d2" stroke="none"><ellipse cx="11.3" cy="12.3" rx="8.4" ry="8.3"/><path d="M7.4 4.300Q11.300 -1.300 15.200 4.300Q11.300 7.200 7.400 4.300z"/><path d="M6 8.300l-3.200-3M16.600 8.300l3.200-3M4 11.600h-2.800M18.600 11.600h2.800M6 15.800l-3 2.500M16.600 15.800l3 2.500" stroke="#d2d2d2" stroke-width="1.500" stroke-linecap="round"/></g><path d="M5.800 3.600l5.500 3.400 5.500-3.400M11.300 7v14" stroke="#404244" stroke-width="1.100" fill="none"/></g><path d="M3.600 58.500l2 2 14.500-13-2-2.200z" fill="#c4711b"/><path d="M12.900 41h6.900l6.500 6.900-3.100 3.400-4.200-4.300-3-3z" fill="#8b8d8f"/></svg>
</body></html>
